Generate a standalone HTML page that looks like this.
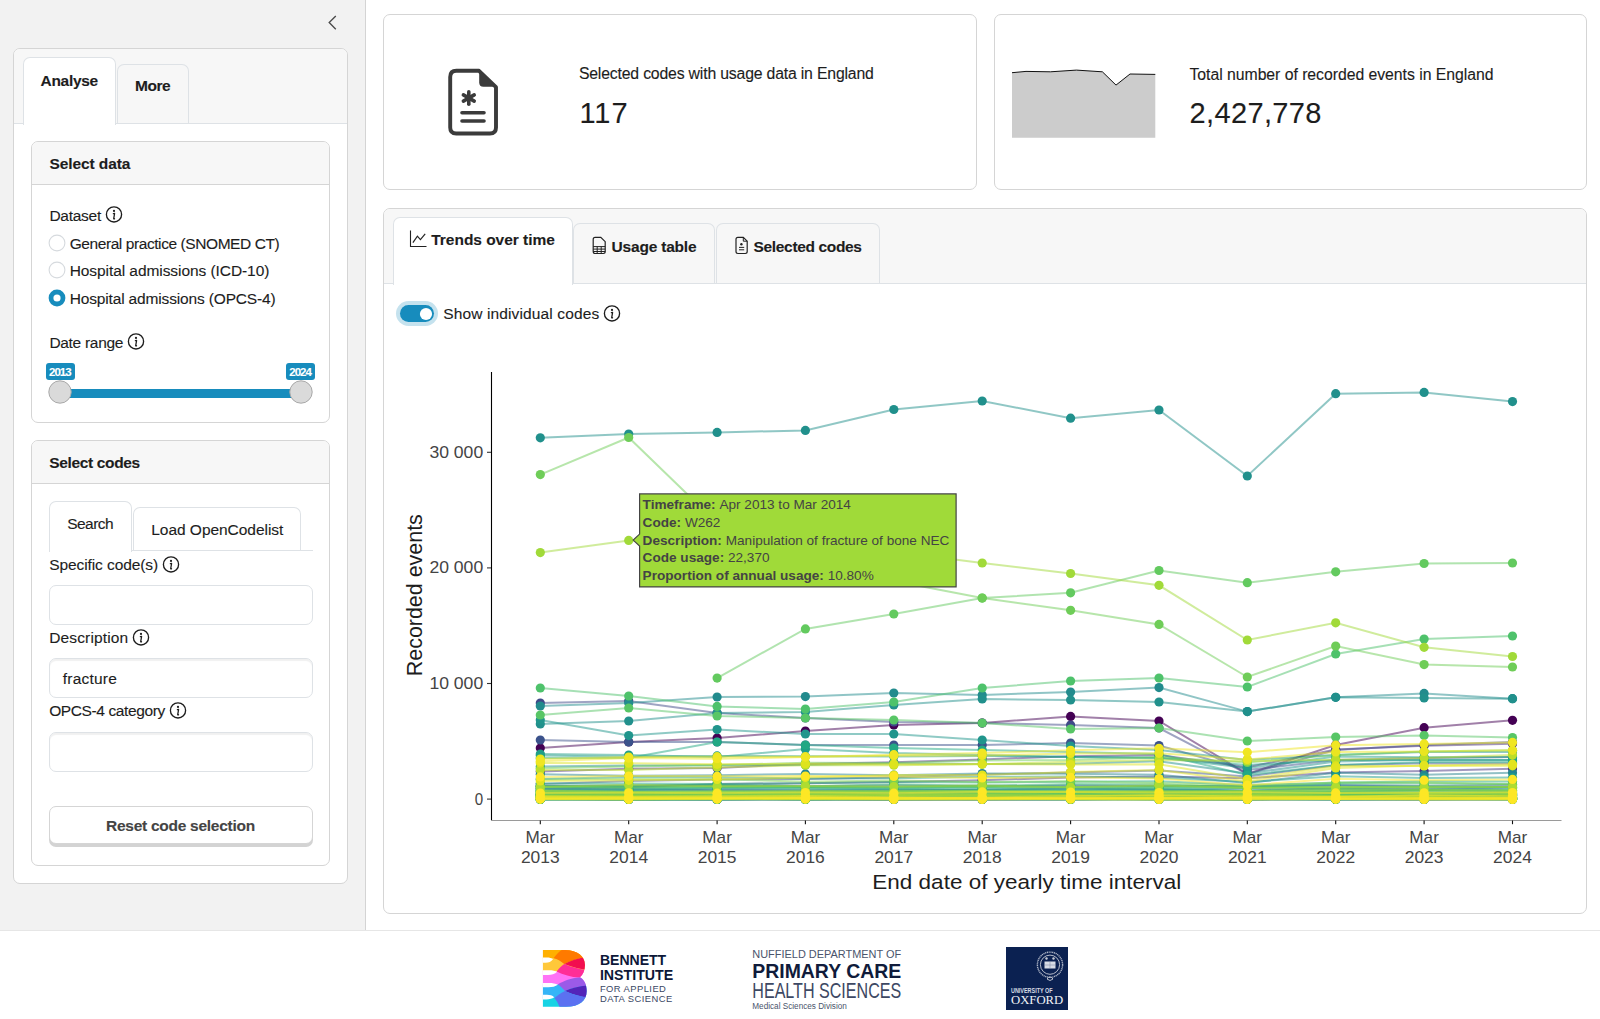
<!DOCTYPE html><html><head><meta charset="utf-8"><style>
html,body{margin:0;padding:0;}
body{width:1600px;height:1019px;position:relative;overflow:hidden;background:#fff;font-family:"Liberation Sans",sans-serif;}
.t{position:absolute;white-space:nowrap;line-height:normal;-webkit-text-stroke:0.12px currentColor;}
svg{overflow:visible;}
</style></head><body>
<div style="position:absolute;left:0.00px;top:0.00px;width:366.00px;height:931.00px;box-sizing:border-box;background:#f2f2f2;border-right:1px solid #d4d4d4;"></div>
<div style="position:absolute;left:0.00px;top:930.00px;width:1600.00px;height:1.00px;box-sizing:border-box;background:#e6e6e6;"></div>
<svg style="position:absolute;left:324.00px;top:12.00px;" width="16.00" height="22.00" viewBox="0 0 16.00 22.00"><path d="M11.8 4 L5.2 10.6 L11.8 17.2" fill="none" stroke="#4a4a4a" stroke-width="1.35"/></svg>
<div style="position:absolute;left:13.00px;top:48.00px;width:335.00px;height:836.00px;box-sizing:border-box;background:#fff;border:1px solid #d5d5d5;border-radius:7px;"></div>
<div style="position:absolute;left:14.00px;top:49.00px;width:333.00px;height:75.00px;box-sizing:border-box;background:#f7f7f7;border-bottom:1px solid #dee2e6;border-radius:6px 6px 0 0;"></div>
<div style="position:absolute;left:23.00px;top:57.00px;width:93.00px;height:67.50px;box-sizing:border-box;background:#fff;border:1px solid #dee2e6;border-bottom:none;border-radius:7px 7px 0 0;"></div>
<div style="position:absolute;left:117.00px;top:64.00px;width:72.00px;height:59.00px;box-sizing:border-box;background:#f7f7f7;border:1px solid #dee2e6;border-bottom:none;border-radius:7px 7px 0 0;"></div>
<div class="t" style="left:40.60px;top:71.56px;font-size:15.50px;font-weight:bold;letter-spacing:-0.324px;color:#1d1d1d;">Analyse</div>
<div class="t" style="left:135.00px;top:77.46px;font-size:15.50px;font-weight:bold;letter-spacing:-0.476px;color:#1d1d1d;">More</div>
<div style="position:absolute;left:31.00px;top:141.00px;width:299.00px;height:281.50px;box-sizing:border-box;background:#fff;border:1px solid #d5d5d5;border-radius:7px;"></div>
<div style="position:absolute;left:32.00px;top:142.00px;width:297.00px;height:43.00px;box-sizing:border-box;background:#f7f7f7;border-bottom:1px solid #d5d5d5;border-radius:6px 6px 0 0;"></div>
<div class="t" style="left:49.40px;top:155.36px;font-size:15.50px;font-weight:bold;letter-spacing:-0.075px;color:#1d1d1d;">Select data</div>
<div class="t" style="left:49.40px;top:206.96px;font-size:15.50px;letter-spacing:-0.252px;color:#1d1d1d;">Dataset</div>
<svg style="position:absolute;left:104.00px;top:204.40px;" width="20.00" height="20.00" viewBox="0 0 20.00 20.00"><circle cx="10" cy="10.4" r="7.60" fill="none" stroke="#1d1d1d" stroke-width="1.35"/><circle cx="10.0" cy="6.9" r="1.1" fill="#1d1d1d"/><path d="M9.4 9.7 L10.6 9.5 L9.7 14.7 Q9.9 15.1 10.5 14.8" fill="none" stroke="#1d1d1d" stroke-width="1.3" stroke-linecap="round" stroke-linejoin="round"/></svg>
<svg style="position:absolute;left:47.00px;top:233.20px;" width="20.00" height="20.00" viewBox="0 0 20.00 20.00"><circle cx="10" cy="10" r="7.9" fill="#fff" stroke="#d6dade" stroke-width="1.1"/></svg>
<div class="t" style="left:69.70px;top:235.16px;font-size:15.50px;letter-spacing:-0.421px;color:#1d1d1d;">General practice (SNOMED CT)</div>
<svg style="position:absolute;left:47.00px;top:260.40px;" width="20.00" height="20.00" viewBox="0 0 20.00 20.00"><circle cx="10" cy="10" r="7.9" fill="#fff" stroke="#d6dade" stroke-width="1.1"/></svg>
<div class="t" style="left:69.70px;top:262.36px;font-size:15.50px;letter-spacing:-0.069px;color:#1d1d1d;">Hospital admissions (ICD-10)</div>
<svg style="position:absolute;left:47.00px;top:287.60px;" width="20.00" height="20.00" viewBox="0 0 20.00 20.00"><circle cx="10" cy="10" r="8.4" fill="#178cbd"/><circle cx="10" cy="10" r="3.6" fill="#fff"/></svg>
<div class="t" style="left:69.70px;top:289.56px;font-size:15.50px;letter-spacing:-0.155px;color:#1d1d1d;">Hospital admissions (OPCS-4)</div>
<div class="t" style="left:49.40px;top:333.96px;font-size:15.50px;letter-spacing:-0.299px;color:#1d1d1d;">Date range</div>
<svg style="position:absolute;left:126.30px;top:331.30px;" width="20.00" height="20.00" viewBox="0 0 20.00 20.00"><circle cx="10" cy="10.4" r="7.60" fill="none" stroke="#1d1d1d" stroke-width="1.35"/><circle cx="10.0" cy="6.9" r="1.1" fill="#1d1d1d"/><path d="M9.4 9.7 L10.6 9.5 L9.7 14.7 Q9.9 15.1 10.5 14.8" fill="none" stroke="#1d1d1d" stroke-width="1.3" stroke-linecap="round" stroke-linejoin="round"/></svg>
<div style="position:absolute;left:60.00px;top:388.60px;width:241.00px;height:9.20px;box-sizing:border-box;background:#178cbd;"></div>
<div style="position:absolute;left:45.70px;top:363.00px;width:29.20px;height:17.00px;box-sizing:border-box;background:#178cbd;border-radius:3px;"></div>
<div class="t" style="left:49.00px;top:365.58px;font-size:11.50px;font-weight:bold;letter-spacing:-0.996px;color:#fff;">2013</div>
<svg style="position:absolute;left:48.30px;top:380.00px;" width="24.00" height="24.00" viewBox="0 0 24.00 24.00"><circle cx="12" cy="12" r="11.2" fill="#dadada" stroke="#a9a9a9" stroke-width="1"/></svg>
<div style="position:absolute;left:286.00px;top:363.00px;width:29.20px;height:17.00px;box-sizing:border-box;background:#178cbd;border-radius:3px;"></div>
<div class="t" style="left:289.30px;top:365.58px;font-size:11.50px;font-weight:bold;letter-spacing:-0.996px;color:#fff;">2024</div>
<svg style="position:absolute;left:288.60px;top:380.00px;" width="24.00" height="24.00" viewBox="0 0 24.00 24.00"><circle cx="12" cy="12" r="11.2" fill="#dadada" stroke="#a9a9a9" stroke-width="1"/></svg>
<div style="position:absolute;left:31.00px;top:440.00px;width:299.00px;height:426.00px;box-sizing:border-box;background:#fff;border:1px solid #d5d5d5;border-radius:7px;"></div>
<div style="position:absolute;left:32.00px;top:441.00px;width:297.00px;height:43.00px;box-sizing:border-box;background:#f7f7f7;border-bottom:1px solid #d5d5d5;border-radius:6px 6px 0 0;"></div>
<div class="t" style="left:49.20px;top:453.96px;font-size:15.50px;font-weight:bold;letter-spacing:-0.342px;color:#1d1d1d;">Select codes</div>
<div style="position:absolute;left:49.00px;top:550.00px;width:263.50px;height:1.00px;box-sizing:border-box;background:#dee2e6;"></div>
<div style="position:absolute;left:49.00px;top:501.00px;width:83.00px;height:50.50px;box-sizing:border-box;background:#fff;border:1px solid #dee2e6;border-bottom:none;border-radius:7px 7px 0 0;"></div>
<div style="position:absolute;left:133.00px;top:507.00px;width:168.00px;height:43.00px;box-sizing:border-box;background:#fff;border:1px solid #dee2e6;border-bottom:none;border-radius:7px 7px 0 0;"></div>
<div class="t" style="left:67.20px;top:514.96px;font-size:15.50px;letter-spacing:-0.521px;color:#1d1d1d;">Search</div>
<div class="t" style="left:151.30px;top:520.76px;font-size:15.50px;letter-spacing:-0.044px;color:#1d1d1d;">Load OpenCodelist</div>
<div class="t" style="left:49.20px;top:555.66px;font-size:15.50px;letter-spacing:-0.084px;color:#1d1d1d;">Specific code(s)</div>
<svg style="position:absolute;left:160.60px;top:553.50px;" width="20.00" height="20.00" viewBox="0 0 20.00 20.00"><circle cx="10" cy="10.4" r="7.60" fill="none" stroke="#1d1d1d" stroke-width="1.35"/><circle cx="10.0" cy="6.9" r="1.1" fill="#1d1d1d"/><path d="M9.4 9.7 L10.6 9.5 L9.7 14.7 Q9.9 15.1 10.5 14.8" fill="none" stroke="#1d1d1d" stroke-width="1.3" stroke-linecap="round" stroke-linejoin="round"/></svg>
<div style="position:absolute;left:49.00px;top:584.50px;width:263.50px;height:40.00px;box-sizing:border-box;background:#fff;border:1px solid #dee2e6;border-radius:7px;"></div>
<div class="t" style="left:49.20px;top:629.46px;font-size:15.50px;letter-spacing:0.147px;color:#1d1d1d;">Description</div>
<svg style="position:absolute;left:131.20px;top:627.00px;" width="20.00" height="20.00" viewBox="0 0 20.00 20.00"><circle cx="10" cy="10.4" r="7.60" fill="none" stroke="#1d1d1d" stroke-width="1.35"/><circle cx="10.0" cy="6.9" r="1.1" fill="#1d1d1d"/><path d="M9.4 9.7 L10.6 9.5 L9.7 14.7 Q9.9 15.1 10.5 14.8" fill="none" stroke="#1d1d1d" stroke-width="1.3" stroke-linecap="round" stroke-linejoin="round"/></svg>
<div style="position:absolute;left:49.00px;top:658.00px;width:263.50px;height:40.00px;box-sizing:border-box;background:#fff;border:1px solid #dee2e6;border-radius:7px;box-shadow:inset 0 2px 1px rgba(0,0,0,0.06);"></div>
<div class="t" style="left:62.80px;top:669.76px;font-size:15.50px;letter-spacing:0.208px;color:#1d1d1d;">fracture</div>
<div class="t" style="left:49.20px;top:702.46px;font-size:15.50px;letter-spacing:-0.390px;color:#1d1d1d;">OPCS-4 category</div>
<svg style="position:absolute;left:167.60px;top:700.00px;" width="20.00" height="20.00" viewBox="0 0 20.00 20.00"><circle cx="10" cy="10.4" r="7.60" fill="none" stroke="#1d1d1d" stroke-width="1.35"/><circle cx="10.0" cy="6.9" r="1.1" fill="#1d1d1d"/><path d="M9.4 9.7 L10.6 9.5 L9.7 14.7 Q9.9 15.1 10.5 14.8" fill="none" stroke="#1d1d1d" stroke-width="1.3" stroke-linecap="round" stroke-linejoin="round"/></svg>
<div style="position:absolute;left:49.00px;top:731.50px;width:263.50px;height:40.00px;box-sizing:border-box;background:#fff;border:1px solid #dee2e6;border-radius:7px;box-shadow:inset 0 2px 1px rgba(0,0,0,0.06);"></div>
<div style="position:absolute;left:49.00px;top:805.50px;width:263.50px;height:38.50px;box-sizing:border-box;background:#fff;border:1px solid #d5d5d5;border-radius:7px;box-shadow:0 3px 0 #d3d3d3;"></div>
<div class="t" style="left:106.10px;top:817.26px;font-size:15.50px;font-weight:bold;letter-spacing:-0.273px;color:#444;">Reset code selection</div>
<div style="position:absolute;left:383.00px;top:14.00px;width:594.00px;height:176.00px;box-sizing:border-box;background:#fff;border:1px solid #d5d5d5;border-radius:7px;"></div>
<div style="position:absolute;left:994.00px;top:14.00px;width:593.00px;height:176.00px;box-sizing:border-box;background:#fff;border:1px solid #d5d5d5;border-radius:7px;"></div>
<svg style="position:absolute;left:440.00px;top:60.00px;" width="70.00" height="85.00" viewBox="0 0 70.00 85.00">
<path d="M10.2 17 Q10.2 10.8 16.4 10.8 L39 10.8 L56 27.2 L56 67.5 Q56 73.5 50 73.5 L16.2 73.5 Q10.2 73.5 10.2 67.5 Z" fill="none" stroke="#3b3b3b" stroke-width="3.9" stroke-linejoin="round"/>
<path d="M39.2 10.8 L39.2 22.5 Q39.2 26.7 43.4 26.7 L56 26.7 Z" fill="#3b3b3b"/>
<g stroke="#3b3b3b" stroke-width="3.6" stroke-linecap="round">
<path d="M28.8 31.8 L28.8 44.2"/><path d="M23.4 34.9 L34.2 41.1"/><path d="M23.4 41.1 L34.2 34.9"/>
<path d="M22 52.7 L44 52.7"/><path d="M22 61 L44 61"/>
</g><circle cx="28.8" cy="38" r="3.3" fill="#3b3b3b"/></svg>
<div class="t" style="left:578.90px;top:65.29px;font-size:15.80px;letter-spacing:-0.179px;color:#1d1d1d;">Selected codes with usage data in England</div>
<div class="t" style="left:579.50px;top:97.03px;font-size:29.00px;letter-spacing:0.887px;color:#1d1d1d;">117</div>
<svg style="position:absolute;left:1000.00px;top:50.00px;" width="170.00" height="100.00" viewBox="0 0 170.00 100.00"><polygon points="12,87.7 12.0,22.7 26.0,21.4 50.4,21.8 76.4,20.1 102.4,21.8 116.0,35.1 130.0,24.0 155.3,24.4 155.3,87.7" fill="#cccccc"/><polyline points="12.0,22.7 26.0,21.4 50.4,21.8 76.4,20.1 102.4,21.8 116.0,35.1 130.0,24.0 155.3,24.4" fill="none" stroke="#111" stroke-width="1"/></svg>
<div class="t" style="left:1189.50px;top:65.59px;font-size:15.80px;letter-spacing:-0.040px;color:#1d1d1d;">Total number of recorded events in England</div>
<div class="t" style="left:1189.50px;top:96.83px;font-size:29.00px;letter-spacing:0.372px;color:#1d1d1d;">2,427,778</div>
<div style="position:absolute;left:383.00px;top:208.00px;width:1204.00px;height:705.50px;box-sizing:border-box;background:#fff;border:1px solid #d5d5d5;border-radius:7px;"></div>
<div style="position:absolute;left:384.00px;top:209.00px;width:1202.00px;height:75.00px;box-sizing:border-box;background:#f7f7f7;border-bottom:1px solid #dee2e6;border-radius:6px 6px 0 0;"></div>
<div style="position:absolute;left:392.50px;top:217.00px;width:180.00px;height:67.50px;box-sizing:border-box;background:#fff;border:1px solid #dee2e6;border-bottom:none;border-radius:7px 7px 0 0;"></div>
<div style="position:absolute;left:573.00px;top:223.00px;width:142.00px;height:60.00px;box-sizing:border-box;background:#f7f7f7;border:1px solid #dee2e6;border-bottom:none;border-radius:7px 7px 0 0;"></div>
<div style="position:absolute;left:715.50px;top:223.00px;width:164.50px;height:60.00px;box-sizing:border-box;background:#f7f7f7;border:1px solid #dee2e6;border-bottom:none;border-radius:7px 7px 0 0;"></div>
<svg style="position:absolute;left:409.00px;top:230.00px;" width="19.00" height="18.00" viewBox="0 0 19.00 18.00"><path d="M1.5 0.5 L1.5 16.5 L17.5 16.5" fill="none" stroke="#222" stroke-width="1.1"/><path d="M3.9 12.6 L8.4 6.2 L11.4 9.6 L16.2 3.8" fill="none" stroke="#222" stroke-width="1.2"/></svg>
<div class="t" style="left:431.30px;top:230.96px;font-size:15.50px;font-weight:bold;letter-spacing:-0.036px;color:#1d1d1d;">Trends over time</div>
<svg style="position:absolute;left:591.00px;top:236.00px;" width="16.00" height="19.00" viewBox="0 0 16.00 19.00"><path d="M2.2 3.2 Q2.2 1.3 4.1 1.3 L9.8 1.3 L14.2 5.7 L14.2 15.6 Q14.2 17.5 12.3 17.5 L4.1 17.5 Q2.2 17.5 2.2 15.6 Z" fill="none" stroke="#222" stroke-width="1.2"/><path d="M2.2 10.6 L14.2 10.6 M2.2 13.1 L14.2 13.1 M2.2 15.5 L14.2 15.5 M6.2 10.6 L6.2 17.5 M10.2 10.6 L10.2 17.5" stroke="#222" stroke-width="1"/></svg>
<div class="t" style="left:611.60px;top:237.56px;font-size:15.50px;font-weight:bold;letter-spacing:-0.200px;color:#1d1d1d;">Usage table</div>
<svg style="position:absolute;left:734.00px;top:236.00px;" width="15.00" height="19.00" viewBox="0 0 15.00 19.00"><path d="M2 3.2 Q2 1.3 3.9 1.3 L9.3 1.3 L13.2 5.2 L13.2 15.6 Q13.2 17.5 11.3 17.5 L3.9 17.5 Q2 17.5 2 15.6 Z" fill="none" stroke="#222" stroke-width="1.2"/><path d="M9.3 1.3 L9.3 5.2 L13.2 5.2" fill="none" stroke="#222" stroke-width="1"/><circle cx="7.4" cy="8.3" r="1.2" fill="#222"/><path d="M5 11.4 L10.2 11.4 M5 13.8 L10.2 13.8" stroke="#222" stroke-width="1"/></svg>
<div class="t" style="left:753.60px;top:237.56px;font-size:15.50px;font-weight:bold;letter-spacing:-0.343px;color:#1d1d1d;">Selected codes</div>
<div style="position:absolute;left:396.00px;top:301.00px;width:42.00px;height:25.00px;box-sizing:border-box;background:rgba(23,140,189,0.25);border-radius:13px;"></div>
<div style="position:absolute;left:400.40px;top:305.00px;width:33.60px;height:17.20px;box-sizing:border-box;background:#178cbd;border-radius:9px;"></div>
<svg style="position:absolute;left:418.60px;top:306.60px;" width="14.00" height="14.00" viewBox="0 0 14.00 14.00"><circle cx="7" cy="7" r="6.1" fill="#fff"/></svg>
<div class="t" style="left:443.20px;top:305.16px;font-size:15.50px;letter-spacing:0.131px;color:#1d1d1d;">Show individual codes</div>
<svg style="position:absolute;left:601.50px;top:303.40px;" width="20.00" height="20.00" viewBox="0 0 20.00 20.00"><circle cx="10" cy="10.4" r="7.60" fill="none" stroke="#1d1d1d" stroke-width="1.35"/><circle cx="10.0" cy="6.9" r="1.1" fill="#1d1d1d"/><path d="M9.4 9.7 L10.6 9.5 L9.7 14.7 Q9.9 15.1 10.5 14.8" fill="none" stroke="#1d1d1d" stroke-width="1.3" stroke-linecap="round" stroke-linejoin="round"/></svg>
<svg style="position:absolute;left:0;top:0;font-family:'Liberation Sans',sans-serif" width="1600" height="1019" viewBox="0 0 1600 1019"><path d="M540.3 748.0 L628.7 742.0 L717.1 738.0 L805.4 731.0 L893.8 725.0 L982.2 723.0 L1070.6 716.4 L1159.0 721.0 L1247.3 774.0 L1335.7 745.0 L1424.1 727.7 L1512.5 720.3" fill="none" stroke="#440154" stroke-opacity="0.5" stroke-width="2"/><circle cx="540.3" cy="748.0" r="4.6" fill="#440154"/><circle cx="628.7" cy="742.0" r="4.6" fill="#440154"/><circle cx="717.1" cy="738.0" r="4.6" fill="#440154"/><circle cx="805.4" cy="731.0" r="4.6" fill="#440154"/><circle cx="893.8" cy="725.0" r="4.6" fill="#440154"/><circle cx="982.2" cy="723.0" r="4.6" fill="#440154"/><circle cx="1070.6" cy="716.4" r="4.6" fill="#440154"/><circle cx="1159.0" cy="721.0" r="4.6" fill="#440154"/><circle cx="1247.3" cy="774.0" r="4.6" fill="#440154"/><circle cx="1335.7" cy="745.0" r="4.6" fill="#440154"/><circle cx="1424.1" cy="727.7" r="4.6" fill="#440154"/><circle cx="1512.5" cy="720.3" r="4.6" fill="#440154"/><path d="M540.3 771.4 L628.7 768.8 L717.1 767.9 L805.4 763.9 L893.8 762.2 L982.2 759.4 L1070.6 756.2 L1159.0 754.9 L1247.3 767.2 L1335.7 749.5 L1424.1 745.7 L1512.5 743.8" fill="none" stroke="#472b7a" stroke-opacity="0.5" stroke-width="2"/><circle cx="540.3" cy="771.4" r="4.6" fill="#472b7a"/><circle cx="628.7" cy="768.8" r="4.6" fill="#472b7a"/><circle cx="717.1" cy="767.9" r="4.6" fill="#472b7a"/><circle cx="805.4" cy="763.9" r="4.6" fill="#472b7a"/><circle cx="893.8" cy="762.2" r="4.6" fill="#472b7a"/><circle cx="982.2" cy="759.4" r="4.6" fill="#472b7a"/><circle cx="1070.6" cy="756.2" r="4.6" fill="#472b7a"/><circle cx="1159.0" cy="754.9" r="4.6" fill="#472b7a"/><circle cx="1247.3" cy="767.2" r="4.6" fill="#472b7a"/><circle cx="1335.7" cy="749.5" r="4.6" fill="#472b7a"/><circle cx="1424.1" cy="745.7" r="4.6" fill="#472b7a"/><circle cx="1512.5" cy="743.8" r="4.6" fill="#472b7a"/><path d="M540.3 788.6 L628.7 787.2 L717.1 784.1 L805.4 783.2 L893.8 782.0 L982.2 780.2 L1070.6 777.4 L1159.0 776.6 L1247.3 778.2 L1335.7 772.6 L1424.1 771.0 L1512.5 768.7" fill="none" stroke="#463480" stroke-opacity="0.5" stroke-width="2"/><circle cx="540.3" cy="788.6" r="4.6" fill="#463480"/><circle cx="628.7" cy="787.2" r="4.6" fill="#463480"/><circle cx="717.1" cy="784.1" r="4.6" fill="#463480"/><circle cx="805.4" cy="783.2" r="4.6" fill="#463480"/><circle cx="893.8" cy="782.0" r="4.6" fill="#463480"/><circle cx="982.2" cy="780.2" r="4.6" fill="#463480"/><circle cx="1070.6" cy="777.4" r="4.6" fill="#463480"/><circle cx="1159.0" cy="776.6" r="4.6" fill="#463480"/><circle cx="1247.3" cy="778.2" r="4.6" fill="#463480"/><circle cx="1335.7" cy="772.6" r="4.6" fill="#463480"/><circle cx="1424.1" cy="771.0" r="4.6" fill="#463480"/><circle cx="1512.5" cy="768.7" r="4.6" fill="#463480"/><path d="M540.3 703.0 L628.7 701.0 L717.1 713.0 L805.4 718.0 L893.8 722.0 L982.2 723.0 L1070.6 725.0 L1159.0 728.0 L1247.3 774.0 L1335.7 750.0 L1424.1 745.0 L1512.5 742.0" fill="none" stroke="#3f4988" stroke-opacity="0.5" stroke-width="2"/><circle cx="540.3" cy="703.0" r="4.6" fill="#3f4988"/><circle cx="628.7" cy="701.0" r="4.6" fill="#3f4988"/><circle cx="717.1" cy="713.0" r="4.6" fill="#3f4988"/><circle cx="805.4" cy="718.0" r="4.6" fill="#3f4988"/><circle cx="893.8" cy="722.0" r="4.6" fill="#3f4988"/><circle cx="982.2" cy="723.0" r="4.6" fill="#3f4988"/><circle cx="1070.6" cy="725.0" r="4.6" fill="#3f4988"/><circle cx="1159.0" cy="728.0" r="4.6" fill="#3f4988"/><circle cx="1247.3" cy="774.0" r="4.6" fill="#3f4988"/><circle cx="1335.7" cy="750.0" r="4.6" fill="#3f4988"/><circle cx="1424.1" cy="745.0" r="4.6" fill="#3f4988"/><circle cx="1512.5" cy="742.0" r="4.6" fill="#3f4988"/><path d="M540.3 740.0 L628.7 742.0 L717.1 742.0 L805.4 745.0 L893.8 745.0 L982.2 745.0 L1070.6 743.0 L1159.0 745.6 L1247.3 770.0 L1335.7 760.0 L1424.1 758.0 L1512.5 757.0" fill="none" stroke="#3b528b" stroke-opacity="0.5" stroke-width="2"/><circle cx="540.3" cy="740.0" r="4.6" fill="#3b528b"/><circle cx="628.7" cy="742.0" r="4.6" fill="#3b528b"/><circle cx="717.1" cy="742.0" r="4.6" fill="#3b528b"/><circle cx="805.4" cy="745.0" r="4.6" fill="#3b528b"/><circle cx="893.8" cy="745.0" r="4.6" fill="#3b528b"/><circle cx="982.2" cy="745.0" r="4.6" fill="#3b528b"/><circle cx="1070.6" cy="743.0" r="4.6" fill="#3b528b"/><circle cx="1159.0" cy="745.6" r="4.6" fill="#3b528b"/><circle cx="1247.3" cy="770.0" r="4.6" fill="#3b528b"/><circle cx="1335.7" cy="760.0" r="4.6" fill="#3b528b"/><circle cx="1424.1" cy="758.0" r="4.6" fill="#3b528b"/><circle cx="1512.5" cy="757.0" r="4.6" fill="#3b528b"/><path d="M540.3 784.0 L628.7 781.0 L717.1 779.6 L805.4 778.9 L893.8 777.2 L982.2 774.4 L1070.6 772.6 L1159.0 770.4 L1247.3 776.4 L1335.7 765.2 L1424.1 763.2 L1512.5 763.4" fill="none" stroke="#3b528b" stroke-opacity="0.5" stroke-width="2"/><circle cx="540.3" cy="784.0" r="4.6" fill="#3b528b"/><circle cx="628.7" cy="781.0" r="4.6" fill="#3b528b"/><circle cx="717.1" cy="779.6" r="4.6" fill="#3b528b"/><circle cx="805.4" cy="778.9" r="4.6" fill="#3b528b"/><circle cx="893.8" cy="777.2" r="4.6" fill="#3b528b"/><circle cx="982.2" cy="774.4" r="4.6" fill="#3b528b"/><circle cx="1070.6" cy="772.6" r="4.6" fill="#3b528b"/><circle cx="1159.0" cy="770.4" r="4.6" fill="#3b528b"/><circle cx="1247.3" cy="776.4" r="4.6" fill="#3b528b"/><circle cx="1335.7" cy="765.2" r="4.6" fill="#3b528b"/><circle cx="1424.1" cy="763.2" r="4.6" fill="#3b528b"/><circle cx="1512.5" cy="763.4" r="4.6" fill="#3b528b"/><path d="M540.3 790.6 L628.7 789.1 L717.1 790.2 L805.4 790.9 L893.8 790.4 L982.2 789.8 L1070.6 788.8 L1159.0 789.4 L1247.3 790.8 L1335.7 788.3 L1424.1 789.0 L1512.5 787.0" fill="none" stroke="#355f8d" stroke-opacity="0.5" stroke-width="2"/><circle cx="540.3" cy="790.6" r="4.6" fill="#355f8d"/><circle cx="628.7" cy="789.1" r="4.6" fill="#355f8d"/><circle cx="717.1" cy="790.2" r="4.6" fill="#355f8d"/><circle cx="805.4" cy="790.9" r="4.6" fill="#355f8d"/><circle cx="893.8" cy="790.4" r="4.6" fill="#355f8d"/><circle cx="982.2" cy="789.8" r="4.6" fill="#355f8d"/><circle cx="1070.6" cy="788.8" r="4.6" fill="#355f8d"/><circle cx="1159.0" cy="789.4" r="4.6" fill="#355f8d"/><circle cx="1247.3" cy="790.8" r="4.6" fill="#355f8d"/><circle cx="1335.7" cy="788.3" r="4.6" fill="#355f8d"/><circle cx="1424.1" cy="789.0" r="4.6" fill="#355f8d"/><circle cx="1512.5" cy="787.0" r="4.6" fill="#355f8d"/><path d="M540.3 794.5 L628.7 794.5 L717.1 793.8 L805.4 793.8 L893.8 793.9 L982.2 793.2 L1070.6 793.9 L1159.0 794.3 L1247.3 794.8 L1335.7 794.5 L1424.1 794.3 L1512.5 794.2" fill="none" stroke="#34628d" stroke-opacity="0.5" stroke-width="2"/><circle cx="540.3" cy="794.5" r="4.6" fill="#34628d"/><circle cx="628.7" cy="794.5" r="4.6" fill="#34628d"/><circle cx="717.1" cy="793.8" r="4.6" fill="#34628d"/><circle cx="805.4" cy="793.8" r="4.6" fill="#34628d"/><circle cx="893.8" cy="793.9" r="4.6" fill="#34628d"/><circle cx="982.2" cy="793.2" r="4.6" fill="#34628d"/><circle cx="1070.6" cy="793.9" r="4.6" fill="#34628d"/><circle cx="1159.0" cy="794.3" r="4.6" fill="#34628d"/><circle cx="1247.3" cy="794.8" r="4.6" fill="#34628d"/><circle cx="1335.7" cy="794.5" r="4.6" fill="#34628d"/><circle cx="1424.1" cy="794.3" r="4.6" fill="#34628d"/><circle cx="1512.5" cy="794.2" r="4.6" fill="#34628d"/><path d="M540.3 786.1 L628.7 785.8 L717.1 785.0 L805.4 786.2 L893.8 785.3 L982.2 786.3 L1070.6 785.2 L1159.0 785.8 L1247.3 786.2 L1335.7 785.1 L1424.1 785.7 L1512.5 785.0" fill="none" stroke="#33648e" stroke-opacity="0.5" stroke-width="2"/><circle cx="540.3" cy="786.1" r="4.6" fill="#33648e"/><circle cx="628.7" cy="785.8" r="4.6" fill="#33648e"/><circle cx="717.1" cy="785.0" r="4.6" fill="#33648e"/><circle cx="805.4" cy="786.2" r="4.6" fill="#33648e"/><circle cx="893.8" cy="785.3" r="4.6" fill="#33648e"/><circle cx="982.2" cy="786.3" r="4.6" fill="#33648e"/><circle cx="1070.6" cy="785.2" r="4.6" fill="#33648e"/><circle cx="1159.0" cy="785.8" r="4.6" fill="#33648e"/><circle cx="1247.3" cy="786.2" r="4.6" fill="#33648e"/><circle cx="1335.7" cy="785.1" r="4.6" fill="#33648e"/><circle cx="1424.1" cy="785.7" r="4.6" fill="#33648e"/><circle cx="1512.5" cy="785.0" r="4.6" fill="#33648e"/><path d="M540.3 798.9 L628.7 799.4 L717.1 799.4 L805.4 799.3 L893.8 799.4 L982.2 799.4 L1070.6 799.4 L1159.0 799.4 L1247.3 799.4 L1335.7 798.6 L1424.1 799.4 L1512.5 799.4" fill="none" stroke="#32668e" stroke-opacity="0.5" stroke-width="2"/><circle cx="540.3" cy="798.9" r="4.6" fill="#32668e"/><circle cx="628.7" cy="799.4" r="4.6" fill="#32668e"/><circle cx="717.1" cy="799.4" r="4.6" fill="#32668e"/><circle cx="805.4" cy="799.3" r="4.6" fill="#32668e"/><circle cx="893.8" cy="799.4" r="4.6" fill="#32668e"/><circle cx="982.2" cy="799.4" r="4.6" fill="#32668e"/><circle cx="1070.6" cy="799.4" r="4.6" fill="#32668e"/><circle cx="1159.0" cy="799.4" r="4.6" fill="#32668e"/><circle cx="1247.3" cy="799.4" r="4.6" fill="#32668e"/><circle cx="1335.7" cy="798.6" r="4.6" fill="#32668e"/><circle cx="1424.1" cy="799.4" r="4.6" fill="#32668e"/><circle cx="1512.5" cy="799.4" r="4.6" fill="#32668e"/><path d="M540.3 798.7 L628.7 798.6 L717.1 799.4 L805.4 799.4 L893.8 799.4 L982.2 798.8 L1070.6 798.9 L1159.0 798.9 L1247.3 799.4 L1335.7 799.4 L1424.1 799.4 L1512.5 798.7" fill="none" stroke="#31698e" stroke-opacity="0.5" stroke-width="2"/><circle cx="540.3" cy="798.7" r="4.6" fill="#31698e"/><circle cx="628.7" cy="798.6" r="4.6" fill="#31698e"/><circle cx="717.1" cy="799.4" r="4.6" fill="#31698e"/><circle cx="805.4" cy="799.4" r="4.6" fill="#31698e"/><circle cx="893.8" cy="799.4" r="4.6" fill="#31698e"/><circle cx="982.2" cy="798.8" r="4.6" fill="#31698e"/><circle cx="1070.6" cy="798.9" r="4.6" fill="#31698e"/><circle cx="1159.0" cy="798.9" r="4.6" fill="#31698e"/><circle cx="1247.3" cy="799.4" r="4.6" fill="#31698e"/><circle cx="1335.7" cy="799.4" r="4.6" fill="#31698e"/><circle cx="1424.1" cy="799.4" r="4.6" fill="#31698e"/><circle cx="1512.5" cy="798.7" r="4.6" fill="#31698e"/><path d="M540.3 797.2 L628.7 798.4 L717.1 797.2 L805.4 797.2 L893.8 797.9 L982.2 797.8 L1070.6 798.1 L1159.0 797.5 L1247.3 798.3 L1335.7 797.2 L1424.1 797.4 L1512.5 798.1" fill="none" stroke="#2f6c8e" stroke-opacity="0.5" stroke-width="2"/><circle cx="540.3" cy="797.2" r="4.6" fill="#2f6c8e"/><circle cx="628.7" cy="798.4" r="4.6" fill="#2f6c8e"/><circle cx="717.1" cy="797.2" r="4.6" fill="#2f6c8e"/><circle cx="805.4" cy="797.2" r="4.6" fill="#2f6c8e"/><circle cx="893.8" cy="797.9" r="4.6" fill="#2f6c8e"/><circle cx="982.2" cy="797.8" r="4.6" fill="#2f6c8e"/><circle cx="1070.6" cy="798.1" r="4.6" fill="#2f6c8e"/><circle cx="1159.0" cy="797.5" r="4.6" fill="#2f6c8e"/><circle cx="1247.3" cy="798.3" r="4.6" fill="#2f6c8e"/><circle cx="1335.7" cy="797.2" r="4.6" fill="#2f6c8e"/><circle cx="1424.1" cy="797.4" r="4.6" fill="#2f6c8e"/><circle cx="1512.5" cy="798.1" r="4.6" fill="#2f6c8e"/><path d="M540.3 795.9 L628.7 796.7 L717.1 795.7 L805.4 795.3 L893.8 796.4 L982.2 796.6 L1070.6 796.4 L1159.0 796.2 L1247.3 796.4 L1335.7 795.7 L1424.1 796.2 L1512.5 795.3" fill="none" stroke="#2d728e" stroke-opacity="0.5" stroke-width="2"/><circle cx="540.3" cy="795.9" r="4.6" fill="#2d728e"/><circle cx="628.7" cy="796.7" r="4.6" fill="#2d728e"/><circle cx="717.1" cy="795.7" r="4.6" fill="#2d728e"/><circle cx="805.4" cy="795.3" r="4.6" fill="#2d728e"/><circle cx="893.8" cy="796.4" r="4.6" fill="#2d728e"/><circle cx="982.2" cy="796.6" r="4.6" fill="#2d728e"/><circle cx="1070.6" cy="796.4" r="4.6" fill="#2d728e"/><circle cx="1159.0" cy="796.2" r="4.6" fill="#2d728e"/><circle cx="1247.3" cy="796.4" r="4.6" fill="#2d728e"/><circle cx="1335.7" cy="795.7" r="4.6" fill="#2d728e"/><circle cx="1424.1" cy="796.2" r="4.6" fill="#2d728e"/><circle cx="1512.5" cy="795.3" r="4.6" fill="#2d728e"/><path d="M540.3 799.4 L628.7 799.4 L717.1 799.3 L805.4 798.8 L893.8 799.4 L982.2 799.4 L1070.6 798.9 L1159.0 799.2 L1247.3 799.4 L1335.7 798.3 L1424.1 798.6 L1512.5 799.0" fill="none" stroke="#2b758e" stroke-opacity="0.5" stroke-width="2"/><circle cx="540.3" cy="799.4" r="4.6" fill="#2b758e"/><circle cx="628.7" cy="799.4" r="4.6" fill="#2b758e"/><circle cx="717.1" cy="799.3" r="4.6" fill="#2b758e"/><circle cx="805.4" cy="798.8" r="4.6" fill="#2b758e"/><circle cx="893.8" cy="799.4" r="4.6" fill="#2b758e"/><circle cx="982.2" cy="799.4" r="4.6" fill="#2b758e"/><circle cx="1070.6" cy="798.9" r="4.6" fill="#2b758e"/><circle cx="1159.0" cy="799.2" r="4.6" fill="#2b758e"/><circle cx="1247.3" cy="799.4" r="4.6" fill="#2b758e"/><circle cx="1335.7" cy="798.3" r="4.6" fill="#2b758e"/><circle cx="1424.1" cy="798.6" r="4.6" fill="#2b758e"/><circle cx="1512.5" cy="799.0" r="4.6" fill="#2b758e"/><path d="M540.3 791.2 L628.7 791.1 L717.1 790.4 L805.4 790.4 L893.8 790.6 L982.2 790.5 L1070.6 791.5 L1159.0 790.9 L1247.3 791.1 L1335.7 791.7 L1424.1 790.5 L1512.5 791.0" fill="none" stroke="#2b768e" stroke-opacity="0.5" stroke-width="2"/><circle cx="540.3" cy="791.2" r="4.6" fill="#2b768e"/><circle cx="628.7" cy="791.1" r="4.6" fill="#2b768e"/><circle cx="717.1" cy="790.4" r="4.6" fill="#2b768e"/><circle cx="805.4" cy="790.4" r="4.6" fill="#2b768e"/><circle cx="893.8" cy="790.6" r="4.6" fill="#2b768e"/><circle cx="982.2" cy="790.5" r="4.6" fill="#2b768e"/><circle cx="1070.6" cy="791.5" r="4.6" fill="#2b768e"/><circle cx="1159.0" cy="790.9" r="4.6" fill="#2b768e"/><circle cx="1247.3" cy="791.1" r="4.6" fill="#2b768e"/><circle cx="1335.7" cy="791.7" r="4.6" fill="#2b768e"/><circle cx="1424.1" cy="790.5" r="4.6" fill="#2b768e"/><circle cx="1512.5" cy="791.0" r="4.6" fill="#2b768e"/><path d="M540.3 798.4 L628.7 799.0 L717.1 799.2 L805.4 799.4 L893.8 798.3 L982.2 798.5 L1070.6 798.6 L1159.0 798.6 L1247.3 798.7 L1335.7 799.4 L1424.1 799.2 L1512.5 798.6" fill="none" stroke="#297b8e" stroke-opacity="0.5" stroke-width="2"/><circle cx="540.3" cy="798.4" r="4.6" fill="#297b8e"/><circle cx="628.7" cy="799.0" r="4.6" fill="#297b8e"/><circle cx="717.1" cy="799.2" r="4.6" fill="#297b8e"/><circle cx="805.4" cy="799.4" r="4.6" fill="#297b8e"/><circle cx="893.8" cy="798.3" r="4.6" fill="#297b8e"/><circle cx="982.2" cy="798.5" r="4.6" fill="#297b8e"/><circle cx="1070.6" cy="798.6" r="4.6" fill="#297b8e"/><circle cx="1159.0" cy="798.6" r="4.6" fill="#297b8e"/><circle cx="1247.3" cy="798.7" r="4.6" fill="#297b8e"/><circle cx="1335.7" cy="799.4" r="4.6" fill="#297b8e"/><circle cx="1424.1" cy="799.2" r="4.6" fill="#297b8e"/><circle cx="1512.5" cy="798.6" r="4.6" fill="#297b8e"/><path d="M540.3 799.1 L628.7 799.4 L717.1 798.5 L805.4 798.8 L893.8 799.4 L982.2 799.4 L1070.6 799.4 L1159.0 798.6 L1247.3 799.3 L1335.7 799.4 L1424.1 799.3 L1512.5 799.4" fill="none" stroke="#297b8e" stroke-opacity="0.5" stroke-width="2"/><circle cx="540.3" cy="799.1" r="4.6" fill="#297b8e"/><circle cx="628.7" cy="799.4" r="4.6" fill="#297b8e"/><circle cx="717.1" cy="798.5" r="4.6" fill="#297b8e"/><circle cx="805.4" cy="798.8" r="4.6" fill="#297b8e"/><circle cx="893.8" cy="799.4" r="4.6" fill="#297b8e"/><circle cx="982.2" cy="799.4" r="4.6" fill="#297b8e"/><circle cx="1070.6" cy="799.4" r="4.6" fill="#297b8e"/><circle cx="1159.0" cy="798.6" r="4.6" fill="#297b8e"/><circle cx="1247.3" cy="799.3" r="4.6" fill="#297b8e"/><circle cx="1335.7" cy="799.4" r="4.6" fill="#297b8e"/><circle cx="1424.1" cy="799.3" r="4.6" fill="#297b8e"/><circle cx="1512.5" cy="799.4" r="4.6" fill="#297b8e"/><path d="M540.3 796.1 L628.7 796.6 L717.1 797.2 L805.4 797.3 L893.8 796.7 L982.2 796.4 L1070.6 796.2 L1159.0 796.9 L1247.3 797.4 L1335.7 796.1 L1424.1 797.1 L1512.5 795.9" fill="none" stroke="#287c8e" stroke-opacity="0.5" stroke-width="2"/><circle cx="540.3" cy="796.1" r="4.6" fill="#287c8e"/><circle cx="628.7" cy="796.6" r="4.6" fill="#287c8e"/><circle cx="717.1" cy="797.2" r="4.6" fill="#287c8e"/><circle cx="805.4" cy="797.3" r="4.6" fill="#287c8e"/><circle cx="893.8" cy="796.7" r="4.6" fill="#287c8e"/><circle cx="982.2" cy="796.4" r="4.6" fill="#287c8e"/><circle cx="1070.6" cy="796.2" r="4.6" fill="#287c8e"/><circle cx="1159.0" cy="796.9" r="4.6" fill="#287c8e"/><circle cx="1247.3" cy="797.4" r="4.6" fill="#287c8e"/><circle cx="1335.7" cy="796.1" r="4.6" fill="#287c8e"/><circle cx="1424.1" cy="797.1" r="4.6" fill="#287c8e"/><circle cx="1512.5" cy="795.9" r="4.6" fill="#287c8e"/><path d="M540.3 797.6 L628.7 796.8 L717.1 796.8 L805.4 797.0 L893.8 797.8 L982.2 797.8 L1070.6 796.7 L1159.0 796.9 L1247.3 796.9 L1335.7 796.9 L1424.1 797.0 L1512.5 796.9" fill="none" stroke="#287c8e" stroke-opacity="0.5" stroke-width="2"/><circle cx="540.3" cy="797.6" r="4.6" fill="#287c8e"/><circle cx="628.7" cy="796.8" r="4.6" fill="#287c8e"/><circle cx="717.1" cy="796.8" r="4.6" fill="#287c8e"/><circle cx="805.4" cy="797.0" r="4.6" fill="#287c8e"/><circle cx="893.8" cy="797.8" r="4.6" fill="#287c8e"/><circle cx="982.2" cy="797.8" r="4.6" fill="#287c8e"/><circle cx="1070.6" cy="796.7" r="4.6" fill="#287c8e"/><circle cx="1159.0" cy="796.9" r="4.6" fill="#287c8e"/><circle cx="1247.3" cy="796.9" r="4.6" fill="#287c8e"/><circle cx="1335.7" cy="796.9" r="4.6" fill="#287c8e"/><circle cx="1424.1" cy="797.0" r="4.6" fill="#287c8e"/><circle cx="1512.5" cy="796.9" r="4.6" fill="#287c8e"/><path d="M540.3 786.0 L628.7 785.6 L717.1 785.8 L805.4 786.8 L893.8 786.7 L982.2 785.6 L1070.6 786.6 L1159.0 785.9 L1247.3 786.0 L1335.7 785.6 L1424.1 786.7 L1512.5 786.9" fill="none" stroke="#287d8e" stroke-opacity="0.5" stroke-width="2"/><circle cx="540.3" cy="786.0" r="4.6" fill="#287d8e"/><circle cx="628.7" cy="785.6" r="4.6" fill="#287d8e"/><circle cx="717.1" cy="785.8" r="4.6" fill="#287d8e"/><circle cx="805.4" cy="786.8" r="4.6" fill="#287d8e"/><circle cx="893.8" cy="786.7" r="4.6" fill="#287d8e"/><circle cx="982.2" cy="785.6" r="4.6" fill="#287d8e"/><circle cx="1070.6" cy="786.6" r="4.6" fill="#287d8e"/><circle cx="1159.0" cy="785.9" r="4.6" fill="#287d8e"/><circle cx="1247.3" cy="786.0" r="4.6" fill="#287d8e"/><circle cx="1335.7" cy="785.6" r="4.6" fill="#287d8e"/><circle cx="1424.1" cy="786.7" r="4.6" fill="#287d8e"/><circle cx="1512.5" cy="786.9" r="4.6" fill="#287d8e"/><path d="M540.3 789.1 L628.7 789.7 L717.1 788.7 L805.4 789.6 L893.8 789.3 L982.2 789.8 L1070.6 788.5 L1159.0 789.7 L1247.3 788.6 L1335.7 789.2 L1424.1 789.9 L1512.5 788.4" fill="none" stroke="#25838e" stroke-opacity="0.5" stroke-width="2"/><circle cx="540.3" cy="789.1" r="4.6" fill="#25838e"/><circle cx="628.7" cy="789.7" r="4.6" fill="#25838e"/><circle cx="717.1" cy="788.7" r="4.6" fill="#25838e"/><circle cx="805.4" cy="789.6" r="4.6" fill="#25838e"/><circle cx="893.8" cy="789.3" r="4.6" fill="#25838e"/><circle cx="982.2" cy="789.8" r="4.6" fill="#25838e"/><circle cx="1070.6" cy="788.5" r="4.6" fill="#25838e"/><circle cx="1159.0" cy="789.7" r="4.6" fill="#25838e"/><circle cx="1247.3" cy="788.6" r="4.6" fill="#25838e"/><circle cx="1335.7" cy="789.2" r="4.6" fill="#25838e"/><circle cx="1424.1" cy="789.9" r="4.6" fill="#25838e"/><circle cx="1512.5" cy="788.4" r="4.6" fill="#25838e"/><path d="M540.3 774.2 L628.7 775.8 L717.1 775.3 L805.4 773.9 L893.8 775.2 L982.2 773.5 L1070.6 773.8 L1159.0 774.8 L1247.3 783.0 L1335.7 772.7 L1424.1 774.7 L1512.5 772.7" fill="none" stroke="#25848e" stroke-opacity="0.5" stroke-width="2"/><circle cx="540.3" cy="774.2" r="4.6" fill="#25848e"/><circle cx="628.7" cy="775.8" r="4.6" fill="#25848e"/><circle cx="717.1" cy="775.3" r="4.6" fill="#25848e"/><circle cx="805.4" cy="773.9" r="4.6" fill="#25848e"/><circle cx="893.8" cy="775.2" r="4.6" fill="#25848e"/><circle cx="982.2" cy="773.5" r="4.6" fill="#25848e"/><circle cx="1070.6" cy="773.8" r="4.6" fill="#25848e"/><circle cx="1159.0" cy="774.8" r="4.6" fill="#25848e"/><circle cx="1247.3" cy="783.0" r="4.6" fill="#25848e"/><circle cx="1335.7" cy="772.7" r="4.6" fill="#25848e"/><circle cx="1424.1" cy="774.7" r="4.6" fill="#25848e"/><circle cx="1512.5" cy="772.7" r="4.6" fill="#25848e"/><path d="M540.3 799.4 L628.7 799.4 L717.1 799.2 L805.4 799.4 L893.8 799.4 L982.2 799.4 L1070.6 799.4 L1159.0 798.7 L1247.3 799.4 L1335.7 799.3 L1424.1 799.4 L1512.5 799.4" fill="none" stroke="#24878e" stroke-opacity="0.5" stroke-width="2"/><circle cx="540.3" cy="799.4" r="4.6" fill="#24878e"/><circle cx="628.7" cy="799.4" r="4.6" fill="#24878e"/><circle cx="717.1" cy="799.2" r="4.6" fill="#24878e"/><circle cx="805.4" cy="799.4" r="4.6" fill="#24878e"/><circle cx="893.8" cy="799.4" r="4.6" fill="#24878e"/><circle cx="982.2" cy="799.4" r="4.6" fill="#24878e"/><circle cx="1070.6" cy="799.4" r="4.6" fill="#24878e"/><circle cx="1159.0" cy="798.7" r="4.6" fill="#24878e"/><circle cx="1247.3" cy="799.4" r="4.6" fill="#24878e"/><circle cx="1335.7" cy="799.3" r="4.6" fill="#24878e"/><circle cx="1424.1" cy="799.4" r="4.6" fill="#24878e"/><circle cx="1512.5" cy="799.4" r="4.6" fill="#24878e"/><path d="M540.3 706.0 L628.7 703.0 L717.1 697.0 L805.4 696.6 L893.8 693.0 L982.2 695.0 L1070.6 692.0 L1159.0 687.6 L1247.3 711.6 L1335.7 697.3 L1424.1 693.4 L1512.5 698.7" fill="none" stroke="#228b8d" stroke-opacity="0.5" stroke-width="2"/><circle cx="540.3" cy="706.0" r="4.6" fill="#228b8d"/><circle cx="628.7" cy="703.0" r="4.6" fill="#228b8d"/><circle cx="717.1" cy="697.0" r="4.6" fill="#228b8d"/><circle cx="805.4" cy="696.6" r="4.6" fill="#228b8d"/><circle cx="893.8" cy="693.0" r="4.6" fill="#228b8d"/><circle cx="982.2" cy="695.0" r="4.6" fill="#228b8d"/><circle cx="1070.6" cy="692.0" r="4.6" fill="#228b8d"/><circle cx="1159.0" cy="687.6" r="4.6" fill="#228b8d"/><circle cx="1247.3" cy="711.6" r="4.6" fill="#228b8d"/><circle cx="1335.7" cy="697.3" r="4.6" fill="#228b8d"/><circle cx="1424.1" cy="693.4" r="4.6" fill="#228b8d"/><circle cx="1512.5" cy="698.7" r="4.6" fill="#228b8d"/><path d="M540.3 437.8 L628.7 434.1 L717.1 432.4 L805.4 430.4 L893.8 409.5 L982.2 401.0 L1070.6 418.2 L1159.0 410.0 L1247.3 476.0 L1335.7 393.7 L1424.1 392.4 L1512.5 401.6" fill="none" stroke="#21908c" stroke-opacity="0.5" stroke-width="2"/><circle cx="540.3" cy="437.8" r="4.6" fill="#21908c"/><circle cx="628.7" cy="434.1" r="4.6" fill="#21908c"/><circle cx="717.1" cy="432.4" r="4.6" fill="#21908c"/><circle cx="805.4" cy="430.4" r="4.6" fill="#21908c"/><circle cx="893.8" cy="409.5" r="4.6" fill="#21908c"/><circle cx="982.2" cy="401.0" r="4.6" fill="#21908c"/><circle cx="1070.6" cy="418.2" r="4.6" fill="#21908c"/><circle cx="1159.0" cy="410.0" r="4.6" fill="#21908c"/><circle cx="1247.3" cy="476.0" r="4.6" fill="#21908c"/><circle cx="1335.7" cy="393.7" r="4.6" fill="#21908c"/><circle cx="1424.1" cy="392.4" r="4.6" fill="#21908c"/><circle cx="1512.5" cy="401.6" r="4.6" fill="#21908c"/><path d="M540.3 724.0 L628.7 721.0 L717.1 713.0 L805.4 712.0 L893.8 705.0 L982.2 699.0 L1070.6 700.0 L1159.0 702.0 L1247.3 711.6 L1335.7 697.3 L1424.1 698.0 L1512.5 698.7" fill="none" stroke="#21908c" stroke-opacity="0.5" stroke-width="2"/><circle cx="540.3" cy="724.0" r="4.6" fill="#21908c"/><circle cx="628.7" cy="721.0" r="4.6" fill="#21908c"/><circle cx="717.1" cy="713.0" r="4.6" fill="#21908c"/><circle cx="805.4" cy="712.0" r="4.6" fill="#21908c"/><circle cx="893.8" cy="705.0" r="4.6" fill="#21908c"/><circle cx="982.2" cy="699.0" r="4.6" fill="#21908c"/><circle cx="1070.6" cy="700.0" r="4.6" fill="#21908c"/><circle cx="1159.0" cy="702.0" r="4.6" fill="#21908c"/><circle cx="1247.3" cy="711.6" r="4.6" fill="#21908c"/><circle cx="1335.7" cy="697.3" r="4.6" fill="#21908c"/><circle cx="1424.1" cy="698.0" r="4.6" fill="#21908c"/><circle cx="1512.5" cy="698.7" r="4.6" fill="#21908c"/><path d="M540.3 766.5 L628.7 765.5 L717.1 765.2 L805.4 765.0 L893.8 763.6 L982.2 764.0 L1070.6 763.7 L1159.0 761.2 L1247.3 773.4 L1335.7 761.6 L1424.1 759.7 L1512.5 759.9" fill="none" stroke="#21908c" stroke-opacity="0.5" stroke-width="2"/><circle cx="540.3" cy="766.5" r="4.6" fill="#21908c"/><circle cx="628.7" cy="765.5" r="4.6" fill="#21908c"/><circle cx="717.1" cy="765.2" r="4.6" fill="#21908c"/><circle cx="805.4" cy="765.0" r="4.6" fill="#21908c"/><circle cx="893.8" cy="763.6" r="4.6" fill="#21908c"/><circle cx="982.2" cy="764.0" r="4.6" fill="#21908c"/><circle cx="1070.6" cy="763.7" r="4.6" fill="#21908c"/><circle cx="1159.0" cy="761.2" r="4.6" fill="#21908c"/><circle cx="1247.3" cy="773.4" r="4.6" fill="#21908c"/><circle cx="1335.7" cy="761.6" r="4.6" fill="#21908c"/><circle cx="1424.1" cy="759.7" r="4.6" fill="#21908c"/><circle cx="1512.5" cy="759.9" r="4.6" fill="#21908c"/><path d="M540.3 797.9 L628.7 798.4 L717.1 797.5 L805.4 798.0 L893.8 798.2 L982.2 798.6 L1070.6 798.7 L1159.0 798.3 L1247.3 797.6 L1335.7 798.6 L1424.1 798.8 L1512.5 798.2" fill="none" stroke="#20938c" stroke-opacity="0.5" stroke-width="2"/><circle cx="540.3" cy="797.9" r="4.6" fill="#20938c"/><circle cx="628.7" cy="798.4" r="4.6" fill="#20938c"/><circle cx="717.1" cy="797.5" r="4.6" fill="#20938c"/><circle cx="805.4" cy="798.0" r="4.6" fill="#20938c"/><circle cx="893.8" cy="798.2" r="4.6" fill="#20938c"/><circle cx="982.2" cy="798.6" r="4.6" fill="#20938c"/><circle cx="1070.6" cy="798.7" r="4.6" fill="#20938c"/><circle cx="1159.0" cy="798.3" r="4.6" fill="#20938c"/><circle cx="1247.3" cy="797.6" r="4.6" fill="#20938c"/><circle cx="1335.7" cy="798.6" r="4.6" fill="#20938c"/><circle cx="1424.1" cy="798.8" r="4.6" fill="#20938c"/><circle cx="1512.5" cy="798.2" r="4.6" fill="#20938c"/><path d="M540.3 720.0 L628.7 735.6 L717.1 729.6 L805.4 734.0 L893.8 734.0 L982.2 740.0 L1070.6 746.0 L1159.0 750.0 L1247.3 760.0 L1335.7 755.0 L1424.1 752.0 L1512.5 752.0" fill="none" stroke="#20958c" stroke-opacity="0.5" stroke-width="2"/><circle cx="540.3" cy="720.0" r="4.6" fill="#20958c"/><circle cx="628.7" cy="735.6" r="4.6" fill="#20958c"/><circle cx="717.1" cy="729.6" r="4.6" fill="#20958c"/><circle cx="805.4" cy="734.0" r="4.6" fill="#20958c"/><circle cx="893.8" cy="734.0" r="4.6" fill="#20958c"/><circle cx="982.2" cy="740.0" r="4.6" fill="#20958c"/><circle cx="1070.6" cy="746.0" r="4.6" fill="#20958c"/><circle cx="1159.0" cy="750.0" r="4.6" fill="#20958c"/><circle cx="1247.3" cy="760.0" r="4.6" fill="#20958c"/><circle cx="1335.7" cy="755.0" r="4.6" fill="#20958c"/><circle cx="1424.1" cy="752.0" r="4.6" fill="#20958c"/><circle cx="1512.5" cy="752.0" r="4.6" fill="#20958c"/><path d="M540.3 798.2 L628.7 799.4 L717.1 799.4 L805.4 798.7 L893.8 798.9 L982.2 798.9 L1070.6 798.5 L1159.0 799.4 L1247.3 799.1 L1335.7 798.5 L1424.1 798.1 L1512.5 798.9" fill="none" stroke="#20968b" stroke-opacity="0.5" stroke-width="2"/><circle cx="540.3" cy="798.2" r="4.6" fill="#20968b"/><circle cx="628.7" cy="799.4" r="4.6" fill="#20968b"/><circle cx="717.1" cy="799.4" r="4.6" fill="#20968b"/><circle cx="805.4" cy="798.7" r="4.6" fill="#20968b"/><circle cx="893.8" cy="798.9" r="4.6" fill="#20968b"/><circle cx="982.2" cy="798.9" r="4.6" fill="#20968b"/><circle cx="1070.6" cy="798.5" r="4.6" fill="#20968b"/><circle cx="1159.0" cy="799.4" r="4.6" fill="#20968b"/><circle cx="1247.3" cy="799.1" r="4.6" fill="#20968b"/><circle cx="1335.7" cy="798.5" r="4.6" fill="#20968b"/><circle cx="1424.1" cy="798.1" r="4.6" fill="#20968b"/><circle cx="1512.5" cy="798.9" r="4.6" fill="#20968b"/><path d="M540.3 798.4 L628.7 797.9 L717.1 798.0 L805.4 798.1 L893.8 798.4 L982.2 796.9 L1070.6 797.8 L1159.0 798.0 L1247.3 797.3 L1335.7 797.5 L1424.1 796.9 L1512.5 797.2" fill="none" stroke="#1f968b" stroke-opacity="0.5" stroke-width="2"/><circle cx="540.3" cy="798.4" r="4.6" fill="#1f968b"/><circle cx="628.7" cy="797.9" r="4.6" fill="#1f968b"/><circle cx="717.1" cy="798.0" r="4.6" fill="#1f968b"/><circle cx="805.4" cy="798.1" r="4.6" fill="#1f968b"/><circle cx="893.8" cy="798.4" r="4.6" fill="#1f968b"/><circle cx="982.2" cy="796.9" r="4.6" fill="#1f968b"/><circle cx="1070.6" cy="797.8" r="4.6" fill="#1f968b"/><circle cx="1159.0" cy="798.0" r="4.6" fill="#1f968b"/><circle cx="1247.3" cy="797.3" r="4.6" fill="#1f968b"/><circle cx="1335.7" cy="797.5" r="4.6" fill="#1f968b"/><circle cx="1424.1" cy="796.9" r="4.6" fill="#1f968b"/><circle cx="1512.5" cy="797.2" r="4.6" fill="#1f968b"/><path d="M540.3 799.2 L628.7 798.6 L717.1 798.6 L805.4 799.1 L893.8 798.2 L982.2 799.2 L1070.6 798.3 L1159.0 798.9 L1247.3 798.5 L1335.7 798.4 L1424.1 798.9 L1512.5 798.8" fill="none" stroke="#1f968b" stroke-opacity="0.5" stroke-width="2"/><circle cx="540.3" cy="799.2" r="4.6" fill="#1f968b"/><circle cx="628.7" cy="798.6" r="4.6" fill="#1f968b"/><circle cx="717.1" cy="798.6" r="4.6" fill="#1f968b"/><circle cx="805.4" cy="799.1" r="4.6" fill="#1f968b"/><circle cx="893.8" cy="798.2" r="4.6" fill="#1f968b"/><circle cx="982.2" cy="799.2" r="4.6" fill="#1f968b"/><circle cx="1070.6" cy="798.3" r="4.6" fill="#1f968b"/><circle cx="1159.0" cy="798.9" r="4.6" fill="#1f968b"/><circle cx="1247.3" cy="798.5" r="4.6" fill="#1f968b"/><circle cx="1335.7" cy="798.4" r="4.6" fill="#1f968b"/><circle cx="1424.1" cy="798.9" r="4.6" fill="#1f968b"/><circle cx="1512.5" cy="798.8" r="4.6" fill="#1f968b"/><path d="M540.3 798.9 L628.7 798.7 L717.1 798.0 L805.4 799.4 L893.8 799.3 L982.2 798.3 L1070.6 799.0 L1159.0 798.5 L1247.3 798.6 L1335.7 798.9 L1424.1 798.5 L1512.5 798.5" fill="none" stroke="#1f988b" stroke-opacity="0.5" stroke-width="2"/><circle cx="540.3" cy="798.9" r="4.6" fill="#1f988b"/><circle cx="628.7" cy="798.7" r="4.6" fill="#1f988b"/><circle cx="717.1" cy="798.0" r="4.6" fill="#1f988b"/><circle cx="805.4" cy="799.4" r="4.6" fill="#1f988b"/><circle cx="893.8" cy="799.3" r="4.6" fill="#1f988b"/><circle cx="982.2" cy="798.3" r="4.6" fill="#1f988b"/><circle cx="1070.6" cy="799.0" r="4.6" fill="#1f988b"/><circle cx="1159.0" cy="798.5" r="4.6" fill="#1f988b"/><circle cx="1247.3" cy="798.6" r="4.6" fill="#1f988b"/><circle cx="1335.7" cy="798.9" r="4.6" fill="#1f988b"/><circle cx="1424.1" cy="798.5" r="4.6" fill="#1f988b"/><circle cx="1512.5" cy="798.5" r="4.6" fill="#1f988b"/><path d="M540.3 755.6 L628.7 756.7 L717.1 755.9 L805.4 756.2 L893.8 756.6 L982.2 755.9 L1070.6 756.9 L1159.0 757.4 L1247.3 768.1 L1335.7 756.6 L1424.1 757.3 L1512.5 757.0" fill="none" stroke="#209c89" stroke-opacity="0.5" stroke-width="2"/><circle cx="540.3" cy="755.6" r="4.6" fill="#209c89"/><circle cx="628.7" cy="756.7" r="4.6" fill="#209c89"/><circle cx="717.1" cy="755.9" r="4.6" fill="#209c89"/><circle cx="805.4" cy="756.2" r="4.6" fill="#209c89"/><circle cx="893.8" cy="756.6" r="4.6" fill="#209c89"/><circle cx="982.2" cy="755.9" r="4.6" fill="#209c89"/><circle cx="1070.6" cy="756.9" r="4.6" fill="#209c89"/><circle cx="1159.0" cy="757.4" r="4.6" fill="#209c89"/><circle cx="1247.3" cy="768.1" r="4.6" fill="#209c89"/><circle cx="1335.7" cy="756.6" r="4.6" fill="#209c89"/><circle cx="1424.1" cy="757.3" r="4.6" fill="#209c89"/><circle cx="1512.5" cy="757.0" r="4.6" fill="#209c89"/><path d="M540.3 778.9 L628.7 777.1 L717.1 776.9 L805.4 778.6 L893.8 778.3 L982.2 776.8 L1070.6 776.5 L1159.0 777.7 L1247.3 782.1 L1335.7 776.2 L1424.1 777.9 L1512.5 777.6" fill="none" stroke="#209c89" stroke-opacity="0.5" stroke-width="2"/><circle cx="540.3" cy="778.9" r="4.6" fill="#209c89"/><circle cx="628.7" cy="777.1" r="4.6" fill="#209c89"/><circle cx="717.1" cy="776.9" r="4.6" fill="#209c89"/><circle cx="805.4" cy="778.6" r="4.6" fill="#209c89"/><circle cx="893.8" cy="778.3" r="4.6" fill="#209c89"/><circle cx="982.2" cy="776.8" r="4.6" fill="#209c89"/><circle cx="1070.6" cy="776.5" r="4.6" fill="#209c89"/><circle cx="1159.0" cy="777.7" r="4.6" fill="#209c89"/><circle cx="1247.3" cy="782.1" r="4.6" fill="#209c89"/><circle cx="1335.7" cy="776.2" r="4.6" fill="#209c89"/><circle cx="1424.1" cy="777.9" r="4.6" fill="#209c89"/><circle cx="1512.5" cy="777.6" r="4.6" fill="#209c89"/><path d="M540.3 797.9 L628.7 797.7 L717.1 798.0 L805.4 797.9 L893.8 798.0 L982.2 798.0 L1070.6 798.2 L1159.0 797.6 L1247.3 797.5 L1335.7 797.8 L1424.1 797.9 L1512.5 797.3" fill="none" stroke="#209d89" stroke-opacity="0.5" stroke-width="2"/><circle cx="540.3" cy="797.9" r="4.6" fill="#209d89"/><circle cx="628.7" cy="797.7" r="4.6" fill="#209d89"/><circle cx="717.1" cy="798.0" r="4.6" fill="#209d89"/><circle cx="805.4" cy="797.9" r="4.6" fill="#209d89"/><circle cx="893.8" cy="798.0" r="4.6" fill="#209d89"/><circle cx="982.2" cy="798.0" r="4.6" fill="#209d89"/><circle cx="1070.6" cy="798.2" r="4.6" fill="#209d89"/><circle cx="1159.0" cy="797.6" r="4.6" fill="#209d89"/><circle cx="1247.3" cy="797.5" r="4.6" fill="#209d89"/><circle cx="1335.7" cy="797.8" r="4.6" fill="#209d89"/><circle cx="1424.1" cy="797.9" r="4.6" fill="#209d89"/><circle cx="1512.5" cy="797.3" r="4.6" fill="#209d89"/><path d="M540.3 794.9 L628.7 794.0 L717.1 794.3 L805.4 794.1 L893.8 794.9 L982.2 794.2 L1070.6 794.7 L1159.0 795.2 L1247.3 794.2 L1335.7 794.5 L1424.1 794.8 L1512.5 795.1" fill="none" stroke="#209e89" stroke-opacity="0.5" stroke-width="2"/><circle cx="540.3" cy="794.9" r="4.6" fill="#209e89"/><circle cx="628.7" cy="794.0" r="4.6" fill="#209e89"/><circle cx="717.1" cy="794.3" r="4.6" fill="#209e89"/><circle cx="805.4" cy="794.1" r="4.6" fill="#209e89"/><circle cx="893.8" cy="794.9" r="4.6" fill="#209e89"/><circle cx="982.2" cy="794.2" r="4.6" fill="#209e89"/><circle cx="1070.6" cy="794.7" r="4.6" fill="#209e89"/><circle cx="1159.0" cy="795.2" r="4.6" fill="#209e89"/><circle cx="1247.3" cy="794.2" r="4.6" fill="#209e89"/><circle cx="1335.7" cy="794.5" r="4.6" fill="#209e89"/><circle cx="1424.1" cy="794.8" r="4.6" fill="#209e89"/><circle cx="1512.5" cy="795.1" r="4.6" fill="#209e89"/><path d="M540.3 754.0 L628.7 755.0 L717.1 757.0 L805.4 749.0 L893.8 753.0 L982.2 755.0 L1070.6 757.0 L1159.0 758.0 L1247.3 765.0 L1335.7 760.0 L1424.1 760.0 L1512.5 760.0" fill="none" stroke="#209e88" stroke-opacity="0.5" stroke-width="2"/><circle cx="540.3" cy="754.0" r="4.6" fill="#209e88"/><circle cx="628.7" cy="755.0" r="4.6" fill="#209e88"/><circle cx="717.1" cy="757.0" r="4.6" fill="#209e88"/><circle cx="805.4" cy="749.0" r="4.6" fill="#209e88"/><circle cx="893.8" cy="753.0" r="4.6" fill="#209e88"/><circle cx="982.2" cy="755.0" r="4.6" fill="#209e88"/><circle cx="1070.6" cy="757.0" r="4.6" fill="#209e88"/><circle cx="1159.0" cy="758.0" r="4.6" fill="#209e88"/><circle cx="1247.3" cy="765.0" r="4.6" fill="#209e88"/><circle cx="1335.7" cy="760.0" r="4.6" fill="#209e88"/><circle cx="1424.1" cy="760.0" r="4.6" fill="#209e88"/><circle cx="1512.5" cy="760.0" r="4.6" fill="#209e88"/><path d="M540.3 793.8 L628.7 794.9 L717.1 793.6 L805.4 793.7 L893.8 794.7 L982.2 794.0 L1070.6 794.9 L1159.0 794.9 L1247.3 794.6 L1335.7 793.7 L1424.1 794.6 L1512.5 795.0" fill="none" stroke="#21a087" stroke-opacity="0.5" stroke-width="2"/><circle cx="540.3" cy="793.8" r="4.6" fill="#21a087"/><circle cx="628.7" cy="794.9" r="4.6" fill="#21a087"/><circle cx="717.1" cy="793.6" r="4.6" fill="#21a087"/><circle cx="805.4" cy="793.7" r="4.6" fill="#21a087"/><circle cx="893.8" cy="794.7" r="4.6" fill="#21a087"/><circle cx="982.2" cy="794.0" r="4.6" fill="#21a087"/><circle cx="1070.6" cy="794.9" r="4.6" fill="#21a087"/><circle cx="1159.0" cy="794.9" r="4.6" fill="#21a087"/><circle cx="1247.3" cy="794.6" r="4.6" fill="#21a087"/><circle cx="1335.7" cy="793.7" r="4.6" fill="#21a087"/><circle cx="1424.1" cy="794.6" r="4.6" fill="#21a087"/><circle cx="1512.5" cy="795.0" r="4.6" fill="#21a087"/><path d="M540.3 797.8 L628.7 797.1 L717.1 797.7 L805.4 797.3 L893.8 797.8 L982.2 797.4 L1070.6 797.9 L1159.0 796.9 L1247.3 797.9 L1335.7 797.1 L1424.1 798.4 L1512.5 797.8" fill="none" stroke="#21a486" stroke-opacity="0.5" stroke-width="2"/><circle cx="540.3" cy="797.8" r="4.6" fill="#21a486"/><circle cx="628.7" cy="797.1" r="4.6" fill="#21a486"/><circle cx="717.1" cy="797.7" r="4.6" fill="#21a486"/><circle cx="805.4" cy="797.3" r="4.6" fill="#21a486"/><circle cx="893.8" cy="797.8" r="4.6" fill="#21a486"/><circle cx="982.2" cy="797.4" r="4.6" fill="#21a486"/><circle cx="1070.6" cy="797.9" r="4.6" fill="#21a486"/><circle cx="1159.0" cy="796.9" r="4.6" fill="#21a486"/><circle cx="1247.3" cy="797.9" r="4.6" fill="#21a486"/><circle cx="1335.7" cy="797.1" r="4.6" fill="#21a486"/><circle cx="1424.1" cy="798.4" r="4.6" fill="#21a486"/><circle cx="1512.5" cy="797.8" r="4.6" fill="#21a486"/><path d="M540.3 798.0 L628.7 799.0 L717.1 798.2 L805.4 798.6 L893.8 799.0 L982.2 798.5 L1070.6 798.2 L1159.0 799.2 L1247.3 799.2 L1335.7 798.3 L1424.1 798.6 L1512.5 799.3" fill="none" stroke="#22a585" stroke-opacity="0.5" stroke-width="2"/><circle cx="540.3" cy="798.0" r="4.6" fill="#22a585"/><circle cx="628.7" cy="799.0" r="4.6" fill="#22a585"/><circle cx="717.1" cy="798.2" r="4.6" fill="#22a585"/><circle cx="805.4" cy="798.6" r="4.6" fill="#22a585"/><circle cx="893.8" cy="799.0" r="4.6" fill="#22a585"/><circle cx="982.2" cy="798.5" r="4.6" fill="#22a585"/><circle cx="1070.6" cy="798.2" r="4.6" fill="#22a585"/><circle cx="1159.0" cy="799.2" r="4.6" fill="#22a585"/><circle cx="1247.3" cy="799.2" r="4.6" fill="#22a585"/><circle cx="1335.7" cy="798.3" r="4.6" fill="#22a585"/><circle cx="1424.1" cy="798.6" r="4.6" fill="#22a585"/><circle cx="1512.5" cy="799.3" r="4.6" fill="#22a585"/><path d="M540.3 758.0 L628.7 758.0 L717.1 742.0 L805.4 745.0 L893.8 748.0 L982.2 750.0 L1070.6 752.0 L1159.0 754.0 L1247.3 775.0 L1335.7 765.0 L1424.1 762.0 L1512.5 762.0" fill="none" stroke="#22a884" stroke-opacity="0.5" stroke-width="2"/><circle cx="540.3" cy="758.0" r="4.6" fill="#22a884"/><circle cx="628.7" cy="758.0" r="4.6" fill="#22a884"/><circle cx="717.1" cy="742.0" r="4.6" fill="#22a884"/><circle cx="805.4" cy="745.0" r="4.6" fill="#22a884"/><circle cx="893.8" cy="748.0" r="4.6" fill="#22a884"/><circle cx="982.2" cy="750.0" r="4.6" fill="#22a884"/><circle cx="1070.6" cy="752.0" r="4.6" fill="#22a884"/><circle cx="1159.0" cy="754.0" r="4.6" fill="#22a884"/><circle cx="1247.3" cy="775.0" r="4.6" fill="#22a884"/><circle cx="1335.7" cy="765.0" r="4.6" fill="#22a884"/><circle cx="1424.1" cy="762.0" r="4.6" fill="#22a884"/><circle cx="1512.5" cy="762.0" r="4.6" fill="#22a884"/><path d="M540.3 783.4 L628.7 783.6 L717.1 783.9 L805.4 783.2 L893.8 781.9 L982.2 782.5 L1070.6 781.7 L1159.0 781.2 L1247.3 785.0 L1335.7 782.7 L1424.1 781.3 L1512.5 781.5" fill="none" stroke="#22a884" stroke-opacity="0.5" stroke-width="2"/><circle cx="540.3" cy="783.4" r="4.6" fill="#22a884"/><circle cx="628.7" cy="783.6" r="4.6" fill="#22a884"/><circle cx="717.1" cy="783.9" r="4.6" fill="#22a884"/><circle cx="805.4" cy="783.2" r="4.6" fill="#22a884"/><circle cx="893.8" cy="781.9" r="4.6" fill="#22a884"/><circle cx="982.2" cy="782.5" r="4.6" fill="#22a884"/><circle cx="1070.6" cy="781.7" r="4.6" fill="#22a884"/><circle cx="1159.0" cy="781.2" r="4.6" fill="#22a884"/><circle cx="1247.3" cy="785.0" r="4.6" fill="#22a884"/><circle cx="1335.7" cy="782.7" r="4.6" fill="#22a884"/><circle cx="1424.1" cy="781.3" r="4.6" fill="#22a884"/><circle cx="1512.5" cy="781.5" r="4.6" fill="#22a884"/><path d="M540.3 792.3 L628.7 792.7 L717.1 793.4 L805.4 793.0 L893.8 792.2 L982.2 792.4 L1070.6 792.3 L1159.0 792.2 L1247.3 792.7 L1335.7 792.2 L1424.1 793.5 L1512.5 792.7" fill="none" stroke="#24aa83" stroke-opacity="0.5" stroke-width="2"/><circle cx="540.3" cy="792.3" r="4.6" fill="#24aa83"/><circle cx="628.7" cy="792.7" r="4.6" fill="#24aa83"/><circle cx="717.1" cy="793.4" r="4.6" fill="#24aa83"/><circle cx="805.4" cy="793.0" r="4.6" fill="#24aa83"/><circle cx="893.8" cy="792.2" r="4.6" fill="#24aa83"/><circle cx="982.2" cy="792.4" r="4.6" fill="#24aa83"/><circle cx="1070.6" cy="792.3" r="4.6" fill="#24aa83"/><circle cx="1159.0" cy="792.2" r="4.6" fill="#24aa83"/><circle cx="1247.3" cy="792.7" r="4.6" fill="#24aa83"/><circle cx="1335.7" cy="792.2" r="4.6" fill="#24aa83"/><circle cx="1424.1" cy="793.5" r="4.6" fill="#24aa83"/><circle cx="1512.5" cy="792.7" r="4.6" fill="#24aa83"/><path d="M540.3 788.5 L628.7 789.8 L717.1 788.0 L805.4 788.4 L893.8 789.3 L982.2 788.3 L1070.6 790.3 L1159.0 789.0 L1247.3 790.8 L1335.7 788.7 L1424.1 790.2 L1512.5 789.9" fill="none" stroke="#28ac81" stroke-opacity="0.5" stroke-width="2"/><circle cx="540.3" cy="788.5" r="4.6" fill="#28ac81"/><circle cx="628.7" cy="789.8" r="4.6" fill="#28ac81"/><circle cx="717.1" cy="788.0" r="4.6" fill="#28ac81"/><circle cx="805.4" cy="788.4" r="4.6" fill="#28ac81"/><circle cx="893.8" cy="789.3" r="4.6" fill="#28ac81"/><circle cx="982.2" cy="788.3" r="4.6" fill="#28ac81"/><circle cx="1070.6" cy="790.3" r="4.6" fill="#28ac81"/><circle cx="1159.0" cy="789.0" r="4.6" fill="#28ac81"/><circle cx="1247.3" cy="790.8" r="4.6" fill="#28ac81"/><circle cx="1335.7" cy="788.7" r="4.6" fill="#28ac81"/><circle cx="1424.1" cy="790.2" r="4.6" fill="#28ac81"/><circle cx="1512.5" cy="789.9" r="4.6" fill="#28ac81"/><path d="M540.3 794.7 L628.7 793.8 L717.1 793.9 L805.4 795.0 L893.8 794.9 L982.2 794.9 L1070.6 793.5 L1159.0 793.6 L1247.3 793.9 L1335.7 794.2 L1424.1 794.5 L1512.5 793.6" fill="none" stroke="#29ae80" stroke-opacity="0.5" stroke-width="2"/><circle cx="540.3" cy="794.7" r="4.6" fill="#29ae80"/><circle cx="628.7" cy="793.8" r="4.6" fill="#29ae80"/><circle cx="717.1" cy="793.9" r="4.6" fill="#29ae80"/><circle cx="805.4" cy="795.0" r="4.6" fill="#29ae80"/><circle cx="893.8" cy="794.9" r="4.6" fill="#29ae80"/><circle cx="982.2" cy="794.9" r="4.6" fill="#29ae80"/><circle cx="1070.6" cy="793.5" r="4.6" fill="#29ae80"/><circle cx="1159.0" cy="793.6" r="4.6" fill="#29ae80"/><circle cx="1247.3" cy="793.9" r="4.6" fill="#29ae80"/><circle cx="1335.7" cy="794.2" r="4.6" fill="#29ae80"/><circle cx="1424.1" cy="794.5" r="4.6" fill="#29ae80"/><circle cx="1512.5" cy="793.6" r="4.6" fill="#29ae80"/><path d="M540.3 795.8 L628.7 796.7 L717.1 797.1 L805.4 796.4 L893.8 796.7 L982.2 796.9 L1070.6 795.9 L1159.0 797.1 L1247.3 796.6 L1335.7 795.9 L1424.1 795.7 L1512.5 795.9" fill="none" stroke="#2fb27c" stroke-opacity="0.5" stroke-width="2"/><circle cx="540.3" cy="795.8" r="4.6" fill="#2fb27c"/><circle cx="628.7" cy="796.7" r="4.6" fill="#2fb27c"/><circle cx="717.1" cy="797.1" r="4.6" fill="#2fb27c"/><circle cx="805.4" cy="796.4" r="4.6" fill="#2fb27c"/><circle cx="893.8" cy="796.7" r="4.6" fill="#2fb27c"/><circle cx="982.2" cy="796.9" r="4.6" fill="#2fb27c"/><circle cx="1070.6" cy="795.9" r="4.6" fill="#2fb27c"/><circle cx="1159.0" cy="797.1" r="4.6" fill="#2fb27c"/><circle cx="1247.3" cy="796.6" r="4.6" fill="#2fb27c"/><circle cx="1335.7" cy="795.9" r="4.6" fill="#2fb27c"/><circle cx="1424.1" cy="795.7" r="4.6" fill="#2fb27c"/><circle cx="1512.5" cy="795.9" r="4.6" fill="#2fb27c"/><path d="M540.3 796.7 L628.7 796.6 L717.1 796.3 L805.4 795.5 L893.8 795.3 L982.2 796.6 L1070.6 796.4 L1159.0 796.1 L1247.3 795.7 L1335.7 795.6 L1424.1 796.2 L1512.5 796.0" fill="none" stroke="#32b47b" stroke-opacity="0.5" stroke-width="2"/><circle cx="540.3" cy="796.7" r="4.6" fill="#32b47b"/><circle cx="628.7" cy="796.6" r="4.6" fill="#32b47b"/><circle cx="717.1" cy="796.3" r="4.6" fill="#32b47b"/><circle cx="805.4" cy="795.5" r="4.6" fill="#32b47b"/><circle cx="893.8" cy="795.3" r="4.6" fill="#32b47b"/><circle cx="982.2" cy="796.6" r="4.6" fill="#32b47b"/><circle cx="1070.6" cy="796.4" r="4.6" fill="#32b47b"/><circle cx="1159.0" cy="796.1" r="4.6" fill="#32b47b"/><circle cx="1247.3" cy="795.7" r="4.6" fill="#32b47b"/><circle cx="1335.7" cy="795.6" r="4.6" fill="#32b47b"/><circle cx="1424.1" cy="796.2" r="4.6" fill="#32b47b"/><circle cx="1512.5" cy="796.0" r="4.6" fill="#32b47b"/><path d="M540.3 786.4 L628.7 787.7 L717.1 786.9 L805.4 787.0 L893.8 787.8 L982.2 786.6 L1070.6 787.1 L1159.0 787.8 L1247.3 787.4 L1335.7 787.0 L1424.1 787.8 L1512.5 787.6" fill="none" stroke="#34b67a" stroke-opacity="0.5" stroke-width="2"/><circle cx="540.3" cy="786.4" r="4.6" fill="#34b67a"/><circle cx="628.7" cy="787.7" r="4.6" fill="#34b67a"/><circle cx="717.1" cy="786.9" r="4.6" fill="#34b67a"/><circle cx="805.4" cy="787.0" r="4.6" fill="#34b67a"/><circle cx="893.8" cy="787.8" r="4.6" fill="#34b67a"/><circle cx="982.2" cy="786.6" r="4.6" fill="#34b67a"/><circle cx="1070.6" cy="787.1" r="4.6" fill="#34b67a"/><circle cx="1159.0" cy="787.8" r="4.6" fill="#34b67a"/><circle cx="1247.3" cy="787.4" r="4.6" fill="#34b67a"/><circle cx="1335.7" cy="787.0" r="4.6" fill="#34b67a"/><circle cx="1424.1" cy="787.8" r="4.6" fill="#34b67a"/><circle cx="1512.5" cy="787.6" r="4.6" fill="#34b67a"/><path d="M540.3 795.2 L628.7 795.3 L717.1 796.0 L805.4 796.1 L893.8 795.0 L982.2 796.1 L1070.6 796.2 L1159.0 795.5 L1247.3 795.6 L1335.7 795.0 L1424.1 795.5 L1512.5 795.5" fill="none" stroke="#34b67a" stroke-opacity="0.5" stroke-width="2"/><circle cx="540.3" cy="795.2" r="4.6" fill="#34b67a"/><circle cx="628.7" cy="795.3" r="4.6" fill="#34b67a"/><circle cx="717.1" cy="796.0" r="4.6" fill="#34b67a"/><circle cx="805.4" cy="796.1" r="4.6" fill="#34b67a"/><circle cx="893.8" cy="795.0" r="4.6" fill="#34b67a"/><circle cx="982.2" cy="796.1" r="4.6" fill="#34b67a"/><circle cx="1070.6" cy="796.2" r="4.6" fill="#34b67a"/><circle cx="1159.0" cy="795.5" r="4.6" fill="#34b67a"/><circle cx="1247.3" cy="795.6" r="4.6" fill="#34b67a"/><circle cx="1335.7" cy="795.0" r="4.6" fill="#34b67a"/><circle cx="1424.1" cy="795.5" r="4.6" fill="#34b67a"/><circle cx="1512.5" cy="795.5" r="4.6" fill="#34b67a"/><path d="M540.3 786.6 L628.7 785.8 L717.1 784.5 L805.4 786.2 L893.8 784.2 L982.2 785.8 L1070.6 784.1 L1159.0 784.3 L1247.3 788.0 L1335.7 783.5 L1424.1 783.3 L1512.5 784.0" fill="none" stroke="#3bba76" stroke-opacity="0.5" stroke-width="2"/><circle cx="540.3" cy="786.6" r="4.6" fill="#3bba76"/><circle cx="628.7" cy="785.8" r="4.6" fill="#3bba76"/><circle cx="717.1" cy="784.5" r="4.6" fill="#3bba76"/><circle cx="805.4" cy="786.2" r="4.6" fill="#3bba76"/><circle cx="893.8" cy="784.2" r="4.6" fill="#3bba76"/><circle cx="982.2" cy="785.8" r="4.6" fill="#3bba76"/><circle cx="1070.6" cy="784.1" r="4.6" fill="#3bba76"/><circle cx="1159.0" cy="784.3" r="4.6" fill="#3bba76"/><circle cx="1247.3" cy="788.0" r="4.6" fill="#3bba76"/><circle cx="1335.7" cy="783.5" r="4.6" fill="#3bba76"/><circle cx="1424.1" cy="783.3" r="4.6" fill="#3bba76"/><circle cx="1512.5" cy="784.0" r="4.6" fill="#3bba76"/><path d="M540.3 794.4 L628.7 793.3 L717.1 794.0 L805.4 794.4 L893.8 793.3 L982.2 793.3 L1070.6 794.3 L1159.0 794.6 L1247.3 793.3 L1335.7 794.2 L1424.1 793.4 L1512.5 794.3" fill="none" stroke="#40bc73" stroke-opacity="0.5" stroke-width="2"/><circle cx="540.3" cy="794.4" r="4.6" fill="#40bc73"/><circle cx="628.7" cy="793.3" r="4.6" fill="#40bc73"/><circle cx="717.1" cy="794.0" r="4.6" fill="#40bc73"/><circle cx="805.4" cy="794.4" r="4.6" fill="#40bc73"/><circle cx="893.8" cy="793.3" r="4.6" fill="#40bc73"/><circle cx="982.2" cy="793.3" r="4.6" fill="#40bc73"/><circle cx="1070.6" cy="794.3" r="4.6" fill="#40bc73"/><circle cx="1159.0" cy="794.6" r="4.6" fill="#40bc73"/><circle cx="1247.3" cy="793.3" r="4.6" fill="#40bc73"/><circle cx="1335.7" cy="794.2" r="4.6" fill="#40bc73"/><circle cx="1424.1" cy="793.4" r="4.6" fill="#40bc73"/><circle cx="1512.5" cy="794.3" r="4.6" fill="#40bc73"/><path d="M540.3 786.9 L628.7 787.4 L717.1 786.9 L805.4 787.5 L893.8 787.6 L982.2 786.8 L1070.6 788.2 L1159.0 787.3 L1247.3 787.5 L1335.7 787.6 L1424.1 787.2 L1512.5 787.1" fill="none" stroke="#41bd72" stroke-opacity="0.5" stroke-width="2"/><circle cx="540.3" cy="786.9" r="4.6" fill="#41bd72"/><circle cx="628.7" cy="787.4" r="4.6" fill="#41bd72"/><circle cx="717.1" cy="786.9" r="4.6" fill="#41bd72"/><circle cx="805.4" cy="787.5" r="4.6" fill="#41bd72"/><circle cx="893.8" cy="787.6" r="4.6" fill="#41bd72"/><circle cx="982.2" cy="786.8" r="4.6" fill="#41bd72"/><circle cx="1070.6" cy="788.2" r="4.6" fill="#41bd72"/><circle cx="1159.0" cy="787.3" r="4.6" fill="#41bd72"/><circle cx="1247.3" cy="787.5" r="4.6" fill="#41bd72"/><circle cx="1335.7" cy="787.6" r="4.6" fill="#41bd72"/><circle cx="1424.1" cy="787.2" r="4.6" fill="#41bd72"/><circle cx="1512.5" cy="787.1" r="4.6" fill="#41bd72"/><path d="M540.3 797.0 L628.7 796.9 L717.1 796.3 L805.4 797.3 L893.8 797.1 L982.2 796.6 L1070.6 796.7 L1159.0 796.9 L1247.3 796.6 L1335.7 796.3 L1424.1 797.7 L1512.5 797.8" fill="none" stroke="#44be71" stroke-opacity="0.5" stroke-width="2"/><circle cx="540.3" cy="797.0" r="4.6" fill="#44be71"/><circle cx="628.7" cy="796.9" r="4.6" fill="#44be71"/><circle cx="717.1" cy="796.3" r="4.6" fill="#44be71"/><circle cx="805.4" cy="797.3" r="4.6" fill="#44be71"/><circle cx="893.8" cy="797.1" r="4.6" fill="#44be71"/><circle cx="982.2" cy="796.6" r="4.6" fill="#44be71"/><circle cx="1070.6" cy="796.7" r="4.6" fill="#44be71"/><circle cx="1159.0" cy="796.9" r="4.6" fill="#44be71"/><circle cx="1247.3" cy="796.6" r="4.6" fill="#44be71"/><circle cx="1335.7" cy="796.3" r="4.6" fill="#44be71"/><circle cx="1424.1" cy="797.7" r="4.6" fill="#44be71"/><circle cx="1512.5" cy="797.8" r="4.6" fill="#44be71"/><path d="M540.3 793.2 L628.7 794.8 L717.1 794.0 L805.4 793.3 L893.8 794.2 L982.2 792.7 L1070.6 793.3 L1159.0 792.0 L1247.3 794.8 L1335.7 793.1 L1424.1 793.2 L1512.5 792.9" fill="none" stroke="#44be70" stroke-opacity="0.5" stroke-width="2"/><circle cx="540.3" cy="793.2" r="4.6" fill="#44be70"/><circle cx="628.7" cy="794.8" r="4.6" fill="#44be70"/><circle cx="717.1" cy="794.0" r="4.6" fill="#44be70"/><circle cx="805.4" cy="793.3" r="4.6" fill="#44be70"/><circle cx="893.8" cy="794.2" r="4.6" fill="#44be70"/><circle cx="982.2" cy="792.7" r="4.6" fill="#44be70"/><circle cx="1070.6" cy="793.3" r="4.6" fill="#44be70"/><circle cx="1159.0" cy="792.0" r="4.6" fill="#44be70"/><circle cx="1247.3" cy="794.8" r="4.6" fill="#44be70"/><circle cx="1335.7" cy="793.1" r="4.6" fill="#44be70"/><circle cx="1424.1" cy="793.2" r="4.6" fill="#44be70"/><circle cx="1512.5" cy="792.9" r="4.6" fill="#44be70"/><path d="M540.3 793.3 L628.7 793.2 L717.1 794.0 L805.4 793.4 L893.8 794.4 L982.2 793.8 L1070.6 794.0 L1159.0 793.4 L1247.3 794.2 L1335.7 793.0 L1424.1 793.1 L1512.5 793.0" fill="none" stroke="#48bf6f" stroke-opacity="0.5" stroke-width="2"/><circle cx="540.3" cy="793.3" r="4.6" fill="#48bf6f"/><circle cx="628.7" cy="793.2" r="4.6" fill="#48bf6f"/><circle cx="717.1" cy="794.0" r="4.6" fill="#48bf6f"/><circle cx="805.4" cy="793.4" r="4.6" fill="#48bf6f"/><circle cx="893.8" cy="794.4" r="4.6" fill="#48bf6f"/><circle cx="982.2" cy="793.8" r="4.6" fill="#48bf6f"/><circle cx="1070.6" cy="794.0" r="4.6" fill="#48bf6f"/><circle cx="1159.0" cy="793.4" r="4.6" fill="#48bf6f"/><circle cx="1247.3" cy="794.2" r="4.6" fill="#48bf6f"/><circle cx="1335.7" cy="793.0" r="4.6" fill="#48bf6f"/><circle cx="1424.1" cy="793.1" r="4.6" fill="#48bf6f"/><circle cx="1512.5" cy="793.0" r="4.6" fill="#48bf6f"/><path d="M540.3 688.0 L628.7 696.0 L717.1 706.4 L805.4 709.0 L893.8 702.0 L982.2 688.0 L1070.6 681.0 L1159.0 678.0 L1247.3 687.0 L1335.7 654.0 L1424.1 639.0 L1512.5 636.0" fill="none" stroke="#4ec26b" stroke-opacity="0.5" stroke-width="2"/><circle cx="540.3" cy="688.0" r="4.6" fill="#4ec26b"/><circle cx="628.7" cy="696.0" r="4.6" fill="#4ec26b"/><circle cx="717.1" cy="706.4" r="4.6" fill="#4ec26b"/><circle cx="805.4" cy="709.0" r="4.6" fill="#4ec26b"/><circle cx="893.8" cy="702.0" r="4.6" fill="#4ec26b"/><circle cx="982.2" cy="688.0" r="4.6" fill="#4ec26b"/><circle cx="1070.6" cy="681.0" r="4.6" fill="#4ec26b"/><circle cx="1159.0" cy="678.0" r="4.6" fill="#4ec26b"/><circle cx="1247.3" cy="687.0" r="4.6" fill="#4ec26b"/><circle cx="1335.7" cy="654.0" r="4.6" fill="#4ec26b"/><circle cx="1424.1" cy="639.0" r="4.6" fill="#4ec26b"/><circle cx="1512.5" cy="636.0" r="4.6" fill="#4ec26b"/><path d="M540.3 791.8 L628.7 793.3 L717.1 793.4 L805.4 793.2 L893.8 792.0 L982.2 792.5 L1070.6 791.3 L1159.0 792.5 L1247.3 793.1 L1335.7 790.9 L1424.1 790.1 L1512.5 790.9" fill="none" stroke="#4ec26b" stroke-opacity="0.5" stroke-width="2"/><circle cx="540.3" cy="791.8" r="4.6" fill="#4ec26b"/><circle cx="628.7" cy="793.3" r="4.6" fill="#4ec26b"/><circle cx="717.1" cy="793.4" r="4.6" fill="#4ec26b"/><circle cx="805.4" cy="793.2" r="4.6" fill="#4ec26b"/><circle cx="893.8" cy="792.0" r="4.6" fill="#4ec26b"/><circle cx="982.2" cy="792.5" r="4.6" fill="#4ec26b"/><circle cx="1070.6" cy="791.3" r="4.6" fill="#4ec26b"/><circle cx="1159.0" cy="792.5" r="4.6" fill="#4ec26b"/><circle cx="1247.3" cy="793.1" r="4.6" fill="#4ec26b"/><circle cx="1335.7" cy="790.9" r="4.6" fill="#4ec26b"/><circle cx="1424.1" cy="790.1" r="4.6" fill="#4ec26b"/><circle cx="1512.5" cy="790.9" r="4.6" fill="#4ec26b"/><path d="M540.3 798.3 L628.7 798.7 L717.1 798.1 L805.4 798.7 L893.8 797.7 L982.2 798.2 L1070.6 798.3 L1159.0 799.1 L1247.3 798.9 L1335.7 798.6 L1424.1 797.6 L1512.5 798.2" fill="none" stroke="#51c36a" stroke-opacity="0.5" stroke-width="2"/><circle cx="540.3" cy="798.3" r="4.6" fill="#51c36a"/><circle cx="628.7" cy="798.7" r="4.6" fill="#51c36a"/><circle cx="717.1" cy="798.1" r="4.6" fill="#51c36a"/><circle cx="805.4" cy="798.7" r="4.6" fill="#51c36a"/><circle cx="893.8" cy="797.7" r="4.6" fill="#51c36a"/><circle cx="982.2" cy="798.2" r="4.6" fill="#51c36a"/><circle cx="1070.6" cy="798.3" r="4.6" fill="#51c36a"/><circle cx="1159.0" cy="799.1" r="4.6" fill="#51c36a"/><circle cx="1247.3" cy="798.9" r="4.6" fill="#51c36a"/><circle cx="1335.7" cy="798.6" r="4.6" fill="#51c36a"/><circle cx="1424.1" cy="797.6" r="4.6" fill="#51c36a"/><circle cx="1512.5" cy="798.2" r="4.6" fill="#51c36a"/><path d="M540.3 790.3 L628.7 791.4 L717.1 791.1 L805.4 791.2 L893.8 791.2 L982.2 790.6 L1070.6 791.4 L1159.0 791.3 L1247.3 791.0 L1335.7 791.1 L1424.1 791.1 L1512.5 790.6" fill="none" stroke="#54c568" stroke-opacity="0.5" stroke-width="2"/><circle cx="540.3" cy="790.3" r="4.6" fill="#54c568"/><circle cx="628.7" cy="791.4" r="4.6" fill="#54c568"/><circle cx="717.1" cy="791.1" r="4.6" fill="#54c568"/><circle cx="805.4" cy="791.2" r="4.6" fill="#54c568"/><circle cx="893.8" cy="791.2" r="4.6" fill="#54c568"/><circle cx="982.2" cy="790.6" r="4.6" fill="#54c568"/><circle cx="1070.6" cy="791.4" r="4.6" fill="#54c568"/><circle cx="1159.0" cy="791.3" r="4.6" fill="#54c568"/><circle cx="1247.3" cy="791.0" r="4.6" fill="#54c568"/><circle cx="1335.7" cy="791.1" r="4.6" fill="#54c568"/><circle cx="1424.1" cy="791.1" r="4.6" fill="#54c568"/><circle cx="1512.5" cy="790.6" r="4.6" fill="#54c568"/><path d="M540.3 715.0 L628.7 708.0 L717.1 716.0 L805.4 718.0 L893.8 720.0 L982.2 723.0 L1070.6 729.0 L1159.0 728.0 L1247.3 741.0 L1335.7 737.0 L1424.1 735.6 L1512.5 737.5" fill="none" stroke="#58c666" stroke-opacity="0.5" stroke-width="2"/><circle cx="540.3" cy="715.0" r="4.6" fill="#58c666"/><circle cx="628.7" cy="708.0" r="4.6" fill="#58c666"/><circle cx="717.1" cy="716.0" r="4.6" fill="#58c666"/><circle cx="805.4" cy="718.0" r="4.6" fill="#58c666"/><circle cx="893.8" cy="720.0" r="4.6" fill="#58c666"/><circle cx="982.2" cy="723.0" r="4.6" fill="#58c666"/><circle cx="1070.6" cy="729.0" r="4.6" fill="#58c666"/><circle cx="1159.0" cy="728.0" r="4.6" fill="#58c666"/><circle cx="1247.3" cy="741.0" r="4.6" fill="#58c666"/><circle cx="1335.7" cy="737.0" r="4.6" fill="#58c666"/><circle cx="1424.1" cy="735.6" r="4.6" fill="#58c666"/><circle cx="1512.5" cy="737.5" r="4.6" fill="#58c666"/><path d="M540.3 786.8 L628.7 787.3 L717.1 786.6 L805.4 786.8 L893.8 786.9 L982.2 786.7 L1070.6 787.0 L1159.0 786.1 L1247.3 787.2 L1335.7 787.4 L1424.1 786.3 L1512.5 786.8" fill="none" stroke="#5ac764" stroke-opacity="0.5" stroke-width="2"/><circle cx="540.3" cy="786.8" r="4.6" fill="#5ac764"/><circle cx="628.7" cy="787.3" r="4.6" fill="#5ac764"/><circle cx="717.1" cy="786.6" r="4.6" fill="#5ac764"/><circle cx="805.4" cy="786.8" r="4.6" fill="#5ac764"/><circle cx="893.8" cy="786.9" r="4.6" fill="#5ac764"/><circle cx="982.2" cy="786.7" r="4.6" fill="#5ac764"/><circle cx="1070.6" cy="787.0" r="4.6" fill="#5ac764"/><circle cx="1159.0" cy="786.1" r="4.6" fill="#5ac764"/><circle cx="1247.3" cy="787.2" r="4.6" fill="#5ac764"/><circle cx="1335.7" cy="787.4" r="4.6" fill="#5ac764"/><circle cx="1424.1" cy="786.3" r="4.6" fill="#5ac764"/><circle cx="1512.5" cy="786.8" r="4.6" fill="#5ac764"/><path d="M540.3 795.6 L628.7 794.8 L717.1 794.3 L805.4 795.0 L893.8 795.7 L982.2 795.6 L1070.6 795.1 L1159.0 795.6 L1247.3 795.3 L1335.7 793.5 L1424.1 794.0 L1512.5 793.5" fill="none" stroke="#5ec862" stroke-opacity="0.5" stroke-width="2"/><circle cx="540.3" cy="795.6" r="4.6" fill="#5ec862"/><circle cx="628.7" cy="794.8" r="4.6" fill="#5ec862"/><circle cx="717.1" cy="794.3" r="4.6" fill="#5ec862"/><circle cx="805.4" cy="795.0" r="4.6" fill="#5ec862"/><circle cx="893.8" cy="795.7" r="4.6" fill="#5ec862"/><circle cx="982.2" cy="795.6" r="4.6" fill="#5ec862"/><circle cx="1070.6" cy="795.1" r="4.6" fill="#5ec862"/><circle cx="1159.0" cy="795.6" r="4.6" fill="#5ec862"/><circle cx="1247.3" cy="795.3" r="4.6" fill="#5ec862"/><circle cx="1335.7" cy="793.5" r="4.6" fill="#5ec862"/><circle cx="1424.1" cy="794.0" r="4.6" fill="#5ec862"/><circle cx="1512.5" cy="793.5" r="4.6" fill="#5ec862"/><path d="M717.1 678.1 L805.4 628.9 L893.8 614.0 L982.2 598.1 L1070.6 592.8 L1159.0 570.5 L1247.3 582.7 L1335.7 571.8 L1424.1 563.5 L1512.5 563.0" fill="none" stroke="#63ca5f" stroke-opacity="0.5" stroke-width="2"/><circle cx="717.1" cy="678.1" r="4.6" fill="#63ca5f"/><circle cx="805.4" cy="628.9" r="4.6" fill="#63ca5f"/><circle cx="893.8" cy="614.0" r="4.6" fill="#63ca5f"/><circle cx="982.2" cy="598.1" r="4.6" fill="#63ca5f"/><circle cx="1070.6" cy="592.8" r="4.6" fill="#63ca5f"/><circle cx="1159.0" cy="570.5" r="4.6" fill="#63ca5f"/><circle cx="1247.3" cy="582.7" r="4.6" fill="#63ca5f"/><circle cx="1335.7" cy="571.8" r="4.6" fill="#63ca5f"/><circle cx="1424.1" cy="563.5" r="4.6" fill="#63ca5f"/><circle cx="1512.5" cy="563.0" r="4.6" fill="#63ca5f"/><path d="M540.3 799.4 L628.7 799.4 L717.1 799.0 L805.4 798.7 L893.8 798.7 L982.2 799.1 L1070.6 798.9 L1159.0 799.4 L1247.3 798.5 L1335.7 798.9 L1424.1 798.6 L1512.5 799.4" fill="none" stroke="#66cb5d" stroke-opacity="0.5" stroke-width="2"/><circle cx="540.3" cy="799.4" r="4.6" fill="#66cb5d"/><circle cx="628.7" cy="799.4" r="4.6" fill="#66cb5d"/><circle cx="717.1" cy="799.0" r="4.6" fill="#66cb5d"/><circle cx="805.4" cy="798.7" r="4.6" fill="#66cb5d"/><circle cx="893.8" cy="798.7" r="4.6" fill="#66cb5d"/><circle cx="982.2" cy="799.1" r="4.6" fill="#66cb5d"/><circle cx="1070.6" cy="798.9" r="4.6" fill="#66cb5d"/><circle cx="1159.0" cy="799.4" r="4.6" fill="#66cb5d"/><circle cx="1247.3" cy="798.5" r="4.6" fill="#66cb5d"/><circle cx="1335.7" cy="798.9" r="4.6" fill="#66cb5d"/><circle cx="1424.1" cy="798.6" r="4.6" fill="#66cb5d"/><circle cx="1512.5" cy="799.4" r="4.6" fill="#66cb5d"/><path d="M540.3 799.4 L628.7 799.2 L717.1 798.8 L805.4 798.6 L893.8 799.3 L982.2 798.7 L1070.6 799.2 L1159.0 799.4 L1247.3 799.2 L1335.7 798.9 L1424.1 799.4 L1512.5 799.2" fill="none" stroke="#67cb5c" stroke-opacity="0.5" stroke-width="2"/><circle cx="540.3" cy="799.4" r="4.6" fill="#67cb5c"/><circle cx="628.7" cy="799.2" r="4.6" fill="#67cb5c"/><circle cx="717.1" cy="798.8" r="4.6" fill="#67cb5c"/><circle cx="805.4" cy="798.6" r="4.6" fill="#67cb5c"/><circle cx="893.8" cy="799.3" r="4.6" fill="#67cb5c"/><circle cx="982.2" cy="798.7" r="4.6" fill="#67cb5c"/><circle cx="1070.6" cy="799.2" r="4.6" fill="#67cb5c"/><circle cx="1159.0" cy="799.4" r="4.6" fill="#67cb5c"/><circle cx="1247.3" cy="799.2" r="4.6" fill="#67cb5c"/><circle cx="1335.7" cy="798.9" r="4.6" fill="#67cb5c"/><circle cx="1424.1" cy="799.4" r="4.6" fill="#67cb5c"/><circle cx="1512.5" cy="799.2" r="4.6" fill="#67cb5c"/><path d="M540.3 798.0 L628.7 799.0 L717.1 797.8 L805.4 799.1 L893.8 798.9 L982.2 797.7 L1070.6 797.9 L1159.0 798.7 L1247.3 797.9 L1335.7 797.6 L1424.1 798.8 L1512.5 798.2" fill="none" stroke="#6bcc5a" stroke-opacity="0.5" stroke-width="2"/><circle cx="540.3" cy="798.0" r="4.6" fill="#6bcc5a"/><circle cx="628.7" cy="799.0" r="4.6" fill="#6bcc5a"/><circle cx="717.1" cy="797.8" r="4.6" fill="#6bcc5a"/><circle cx="805.4" cy="799.1" r="4.6" fill="#6bcc5a"/><circle cx="893.8" cy="798.9" r="4.6" fill="#6bcc5a"/><circle cx="982.2" cy="797.7" r="4.6" fill="#6bcc5a"/><circle cx="1070.6" cy="797.9" r="4.6" fill="#6bcc5a"/><circle cx="1159.0" cy="798.7" r="4.6" fill="#6bcc5a"/><circle cx="1247.3" cy="797.9" r="4.6" fill="#6bcc5a"/><circle cx="1335.7" cy="797.6" r="4.6" fill="#6bcc5a"/><circle cx="1424.1" cy="798.8" r="4.6" fill="#6bcc5a"/><circle cx="1512.5" cy="798.2" r="4.6" fill="#6bcc5a"/><path d="M540.3 474.6 L628.7 437.5 L717.1 523.0 L805.4 555.0 L893.8 581.0 L982.2 598.0 L1070.6 610.3 L1159.0 624.4 L1247.3 677.0 L1335.7 646.0 L1424.1 664.6 L1512.5 667.0" fill="none" stroke="#6fcd58" stroke-opacity="0.5" stroke-width="2"/><circle cx="540.3" cy="474.6" r="4.6" fill="#6fcd58"/><circle cx="628.7" cy="437.5" r="4.6" fill="#6fcd58"/><circle cx="717.1" cy="523.0" r="4.6" fill="#6fcd58"/><circle cx="805.4" cy="555.0" r="4.6" fill="#6fcd58"/><circle cx="893.8" cy="581.0" r="4.6" fill="#6fcd58"/><circle cx="982.2" cy="598.0" r="4.6" fill="#6fcd58"/><circle cx="1070.6" cy="610.3" r="4.6" fill="#6fcd58"/><circle cx="1159.0" cy="624.4" r="4.6" fill="#6fcd58"/><circle cx="1247.3" cy="677.0" r="4.6" fill="#6fcd58"/><circle cx="1335.7" cy="646.0" r="4.6" fill="#6fcd58"/><circle cx="1424.1" cy="664.6" r="4.6" fill="#6fcd58"/><circle cx="1512.5" cy="667.0" r="4.6" fill="#6fcd58"/><path d="M540.3 768.3 L628.7 766.4 L717.1 765.0 L805.4 762.8 L893.8 762.9 L982.2 760.4 L1070.6 759.9 L1159.0 757.2 L1247.3 762.5 L1335.7 755.1 L1424.1 751.4 L1512.5 750.3" fill="none" stroke="#6fcd58" stroke-opacity="0.5" stroke-width="2"/><circle cx="540.3" cy="768.3" r="4.6" fill="#6fcd58"/><circle cx="628.7" cy="766.4" r="4.6" fill="#6fcd58"/><circle cx="717.1" cy="765.0" r="4.6" fill="#6fcd58"/><circle cx="805.4" cy="762.8" r="4.6" fill="#6fcd58"/><circle cx="893.8" cy="762.9" r="4.6" fill="#6fcd58"/><circle cx="982.2" cy="760.4" r="4.6" fill="#6fcd58"/><circle cx="1070.6" cy="759.9" r="4.6" fill="#6fcd58"/><circle cx="1159.0" cy="757.2" r="4.6" fill="#6fcd58"/><circle cx="1247.3" cy="762.5" r="4.6" fill="#6fcd58"/><circle cx="1335.7" cy="755.1" r="4.6" fill="#6fcd58"/><circle cx="1424.1" cy="751.4" r="4.6" fill="#6fcd58"/><circle cx="1512.5" cy="750.3" r="4.6" fill="#6fcd58"/><path d="M540.3 798.7 L628.7 799.4 L717.1 799.4 L805.4 799.4 L893.8 799.2 L982.2 799.3 L1070.6 798.9 L1159.0 799.1 L1247.3 799.4 L1335.7 799.4 L1424.1 798.7 L1512.5 798.7" fill="none" stroke="#72ce56" stroke-opacity="0.5" stroke-width="2"/><circle cx="540.3" cy="798.7" r="4.6" fill="#72ce56"/><circle cx="628.7" cy="799.4" r="4.6" fill="#72ce56"/><circle cx="717.1" cy="799.4" r="4.6" fill="#72ce56"/><circle cx="805.4" cy="799.4" r="4.6" fill="#72ce56"/><circle cx="893.8" cy="799.2" r="4.6" fill="#72ce56"/><circle cx="982.2" cy="799.3" r="4.6" fill="#72ce56"/><circle cx="1070.6" cy="798.9" r="4.6" fill="#72ce56"/><circle cx="1159.0" cy="799.1" r="4.6" fill="#72ce56"/><circle cx="1247.3" cy="799.4" r="4.6" fill="#72ce56"/><circle cx="1335.7" cy="799.4" r="4.6" fill="#72ce56"/><circle cx="1424.1" cy="798.7" r="4.6" fill="#72ce56"/><circle cx="1512.5" cy="798.7" r="4.6" fill="#72ce56"/><path d="M540.3 779.4 L628.7 779.0 L717.1 779.2 L805.4 781.8 L893.8 780.5 L982.2 782.0 L1070.6 781.3 L1159.0 783.0 L1247.3 785.7 L1335.7 782.5 L1424.1 782.5 L1512.5 784.2" fill="none" stroke="#7ad151" stroke-opacity="0.5" stroke-width="2"/><circle cx="540.3" cy="779.4" r="4.6" fill="#7ad151"/><circle cx="628.7" cy="779.0" r="4.6" fill="#7ad151"/><circle cx="717.1" cy="779.2" r="4.6" fill="#7ad151"/><circle cx="805.4" cy="781.8" r="4.6" fill="#7ad151"/><circle cx="893.8" cy="780.5" r="4.6" fill="#7ad151"/><circle cx="982.2" cy="782.0" r="4.6" fill="#7ad151"/><circle cx="1070.6" cy="781.3" r="4.6" fill="#7ad151"/><circle cx="1159.0" cy="783.0" r="4.6" fill="#7ad151"/><circle cx="1247.3" cy="785.7" r="4.6" fill="#7ad151"/><circle cx="1335.7" cy="782.5" r="4.6" fill="#7ad151"/><circle cx="1424.1" cy="782.5" r="4.6" fill="#7ad151"/><circle cx="1512.5" cy="784.2" r="4.6" fill="#7ad151"/><path d="M540.3 790.7 L628.7 792.0 L717.1 792.1 L805.4 792.0 L893.8 790.8 L982.2 791.1 L1070.6 791.9 L1159.0 790.9 L1247.3 791.5 L1335.7 791.5 L1424.1 792.2 L1512.5 791.7" fill="none" stroke="#83d34b" stroke-opacity="0.5" stroke-width="2"/><circle cx="540.3" cy="790.7" r="4.6" fill="#83d34b"/><circle cx="628.7" cy="792.0" r="4.6" fill="#83d34b"/><circle cx="717.1" cy="792.1" r="4.6" fill="#83d34b"/><circle cx="805.4" cy="792.0" r="4.6" fill="#83d34b"/><circle cx="893.8" cy="790.8" r="4.6" fill="#83d34b"/><circle cx="982.2" cy="791.1" r="4.6" fill="#83d34b"/><circle cx="1070.6" cy="791.9" r="4.6" fill="#83d34b"/><circle cx="1159.0" cy="790.9" r="4.6" fill="#83d34b"/><circle cx="1247.3" cy="791.5" r="4.6" fill="#83d34b"/><circle cx="1335.7" cy="791.5" r="4.6" fill="#83d34b"/><circle cx="1424.1" cy="792.2" r="4.6" fill="#83d34b"/><circle cx="1512.5" cy="791.7" r="4.6" fill="#83d34b"/><path d="M540.3 797.4 L628.7 796.9 L717.1 796.9 L805.4 797.6 L893.8 797.6 L982.2 797.4 L1070.6 798.0 L1159.0 797.6 L1247.3 798.0 L1335.7 797.0 L1424.1 797.8 L1512.5 797.9" fill="none" stroke="#95d740" stroke-opacity="0.5" stroke-width="2"/><circle cx="540.3" cy="797.4" r="4.6" fill="#95d740"/><circle cx="628.7" cy="796.9" r="4.6" fill="#95d740"/><circle cx="717.1" cy="796.9" r="4.6" fill="#95d740"/><circle cx="805.4" cy="797.6" r="4.6" fill="#95d740"/><circle cx="893.8" cy="797.6" r="4.6" fill="#95d740"/><circle cx="982.2" cy="797.4" r="4.6" fill="#95d740"/><circle cx="1070.6" cy="798.0" r="4.6" fill="#95d740"/><circle cx="1159.0" cy="797.6" r="4.6" fill="#95d740"/><circle cx="1247.3" cy="798.0" r="4.6" fill="#95d740"/><circle cx="1335.7" cy="797.0" r="4.6" fill="#95d740"/><circle cx="1424.1" cy="797.8" r="4.6" fill="#95d740"/><circle cx="1512.5" cy="797.9" r="4.6" fill="#95d740"/><path d="M540.3 792.8 L628.7 793.8 L717.1 792.8 L805.4 793.0 L893.8 792.5 L982.2 793.8 L1070.6 792.5 L1159.0 793.7 L1247.3 793.1 L1335.7 793.2 L1424.1 793.2 L1512.5 792.7" fill="none" stroke="#97d83f" stroke-opacity="0.5" stroke-width="2"/><circle cx="540.3" cy="792.8" r="4.6" fill="#97d83f"/><circle cx="628.7" cy="793.8" r="4.6" fill="#97d83f"/><circle cx="717.1" cy="792.8" r="4.6" fill="#97d83f"/><circle cx="805.4" cy="793.0" r="4.6" fill="#97d83f"/><circle cx="893.8" cy="792.5" r="4.6" fill="#97d83f"/><circle cx="982.2" cy="793.8" r="4.6" fill="#97d83f"/><circle cx="1070.6" cy="792.5" r="4.6" fill="#97d83f"/><circle cx="1159.0" cy="793.7" r="4.6" fill="#97d83f"/><circle cx="1247.3" cy="793.1" r="4.6" fill="#97d83f"/><circle cx="1335.7" cy="793.2" r="4.6" fill="#97d83f"/><circle cx="1424.1" cy="793.2" r="4.6" fill="#97d83f"/><circle cx="1512.5" cy="792.7" r="4.6" fill="#97d83f"/><path d="M540.3 798.3 L628.7 799.2 L717.1 798.8 L805.4 799.2 L893.8 798.6 L982.2 798.5 L1070.6 799.4 L1159.0 799.0 L1247.3 798.8 L1335.7 798.8 L1424.1 799.1 L1512.5 799.1" fill="none" stroke="#9ad83d" stroke-opacity="0.5" stroke-width="2"/><circle cx="540.3" cy="798.3" r="4.6" fill="#9ad83d"/><circle cx="628.7" cy="799.2" r="4.6" fill="#9ad83d"/><circle cx="717.1" cy="798.8" r="4.6" fill="#9ad83d"/><circle cx="805.4" cy="799.2" r="4.6" fill="#9ad83d"/><circle cx="893.8" cy="798.6" r="4.6" fill="#9ad83d"/><circle cx="982.2" cy="798.5" r="4.6" fill="#9ad83d"/><circle cx="1070.6" cy="799.4" r="4.6" fill="#9ad83d"/><circle cx="1159.0" cy="799.0" r="4.6" fill="#9ad83d"/><circle cx="1247.3" cy="798.8" r="4.6" fill="#9ad83d"/><circle cx="1335.7" cy="798.8" r="4.6" fill="#9ad83d"/><circle cx="1424.1" cy="799.1" r="4.6" fill="#9ad83d"/><circle cx="1512.5" cy="799.1" r="4.6" fill="#9ad83d"/><path d="M540.3 790.9 L628.7 792.1 L717.1 791.6 L805.4 790.8 L893.8 791.7 L982.2 791.1 L1070.6 791.2 L1159.0 791.7 L1247.3 791.0 L1335.7 789.2 L1424.1 789.7 L1512.5 790.4" fill="none" stroke="#9ad83d" stroke-opacity="0.5" stroke-width="2"/><circle cx="540.3" cy="790.9" r="4.6" fill="#9ad83d"/><circle cx="628.7" cy="792.1" r="4.6" fill="#9ad83d"/><circle cx="717.1" cy="791.6" r="4.6" fill="#9ad83d"/><circle cx="805.4" cy="790.8" r="4.6" fill="#9ad83d"/><circle cx="893.8" cy="791.7" r="4.6" fill="#9ad83d"/><circle cx="982.2" cy="791.1" r="4.6" fill="#9ad83d"/><circle cx="1070.6" cy="791.2" r="4.6" fill="#9ad83d"/><circle cx="1159.0" cy="791.7" r="4.6" fill="#9ad83d"/><circle cx="1247.3" cy="791.0" r="4.6" fill="#9ad83d"/><circle cx="1335.7" cy="789.2" r="4.6" fill="#9ad83d"/><circle cx="1424.1" cy="789.7" r="4.6" fill="#9ad83d"/><circle cx="1512.5" cy="790.4" r="4.6" fill="#9ad83d"/><path d="M540.3 552.6 L628.7 540.4 L717.1 548.0 L805.4 552.0 L893.8 551.7 L982.2 563.0 L1070.6 573.5 L1159.0 585.3 L1247.3 640.0 L1335.7 622.8 L1424.1 647.3 L1512.5 656.5" fill="none" stroke="#a1da39" stroke-opacity="0.5" stroke-width="2"/><circle cx="540.3" cy="552.6" r="4.6" fill="#a1da39"/><circle cx="628.7" cy="540.4" r="4.6" fill="#a1da39"/><circle cx="717.1" cy="548.0" r="4.6" fill="#a1da39"/><circle cx="805.4" cy="552.0" r="4.6" fill="#a1da39"/><circle cx="893.8" cy="551.7" r="4.6" fill="#a1da39"/><circle cx="982.2" cy="563.0" r="4.6" fill="#a1da39"/><circle cx="1070.6" cy="573.5" r="4.6" fill="#a1da39"/><circle cx="1159.0" cy="585.3" r="4.6" fill="#a1da39"/><circle cx="1247.3" cy="640.0" r="4.6" fill="#a1da39"/><circle cx="1335.7" cy="622.8" r="4.6" fill="#a1da39"/><circle cx="1424.1" cy="647.3" r="4.6" fill="#a1da39"/><circle cx="1512.5" cy="656.5" r="4.6" fill="#a1da39"/><path d="M540.3 798.1 L628.7 797.7 L717.1 799.0 L805.4 798.9 L893.8 798.3 L982.2 798.2 L1070.6 798.6 L1159.0 797.7 L1247.3 797.7 L1335.7 799.1 L1424.1 798.1 L1512.5 798.4" fill="none" stroke="#a1da39" stroke-opacity="0.5" stroke-width="2"/><circle cx="540.3" cy="798.1" r="4.6" fill="#a1da39"/><circle cx="628.7" cy="797.7" r="4.6" fill="#a1da39"/><circle cx="717.1" cy="799.0" r="4.6" fill="#a1da39"/><circle cx="805.4" cy="798.9" r="4.6" fill="#a1da39"/><circle cx="893.8" cy="798.3" r="4.6" fill="#a1da39"/><circle cx="982.2" cy="798.2" r="4.6" fill="#a1da39"/><circle cx="1070.6" cy="798.6" r="4.6" fill="#a1da39"/><circle cx="1159.0" cy="797.7" r="4.6" fill="#a1da39"/><circle cx="1247.3" cy="797.7" r="4.6" fill="#a1da39"/><circle cx="1335.7" cy="799.1" r="4.6" fill="#a1da39"/><circle cx="1424.1" cy="798.1" r="4.6" fill="#a1da39"/><circle cx="1512.5" cy="798.4" r="4.6" fill="#a1da39"/><path d="M540.3 795.9 L628.7 795.5 L717.1 796.0 L805.4 795.5 L893.8 794.9 L982.2 795.8 L1070.6 796.0 L1159.0 795.1 L1247.3 794.7 L1335.7 795.5 L1424.1 795.5 L1512.5 795.5" fill="none" stroke="#aedc31" stroke-opacity="0.5" stroke-width="2"/><circle cx="540.3" cy="795.9" r="4.6" fill="#aedc31"/><circle cx="628.7" cy="795.5" r="4.6" fill="#aedc31"/><circle cx="717.1" cy="796.0" r="4.6" fill="#aedc31"/><circle cx="805.4" cy="795.5" r="4.6" fill="#aedc31"/><circle cx="893.8" cy="794.9" r="4.6" fill="#aedc31"/><circle cx="982.2" cy="795.8" r="4.6" fill="#aedc31"/><circle cx="1070.6" cy="796.0" r="4.6" fill="#aedc31"/><circle cx="1159.0" cy="795.1" r="4.6" fill="#aedc31"/><circle cx="1247.3" cy="794.7" r="4.6" fill="#aedc31"/><circle cx="1335.7" cy="795.5" r="4.6" fill="#aedc31"/><circle cx="1424.1" cy="795.5" r="4.6" fill="#aedc31"/><circle cx="1512.5" cy="795.5" r="4.6" fill="#aedc31"/><path d="M540.3 786.9 L628.7 784.7 L717.1 786.2 L805.4 785.9 L893.8 786.6 L982.2 785.6 L1070.6 787.3 L1159.0 785.2 L1247.3 788.1 L1335.7 786.9 L1424.1 787.3 L1512.5 787.0" fill="none" stroke="#aedc31" stroke-opacity="0.5" stroke-width="2"/><circle cx="540.3" cy="786.9" r="4.6" fill="#aedc31"/><circle cx="628.7" cy="784.7" r="4.6" fill="#aedc31"/><circle cx="717.1" cy="786.2" r="4.6" fill="#aedc31"/><circle cx="805.4" cy="785.9" r="4.6" fill="#aedc31"/><circle cx="893.8" cy="786.6" r="4.6" fill="#aedc31"/><circle cx="982.2" cy="785.6" r="4.6" fill="#aedc31"/><circle cx="1070.6" cy="787.3" r="4.6" fill="#aedc31"/><circle cx="1159.0" cy="785.2" r="4.6" fill="#aedc31"/><circle cx="1247.3" cy="788.1" r="4.6" fill="#aedc31"/><circle cx="1335.7" cy="786.9" r="4.6" fill="#aedc31"/><circle cx="1424.1" cy="787.3" r="4.6" fill="#aedc31"/><circle cx="1512.5" cy="787.0" r="4.6" fill="#aedc31"/><path d="M540.3 797.0 L628.7 796.9 L717.1 797.5 L805.4 796.7 L893.8 798.1 L982.2 798.0 L1070.6 797.8 L1159.0 798.1 L1247.3 797.7 L1335.7 797.3 L1424.1 797.6 L1512.5 797.5" fill="none" stroke="#b4dd2d" stroke-opacity="0.5" stroke-width="2"/><circle cx="540.3" cy="797.0" r="4.6" fill="#b4dd2d"/><circle cx="628.7" cy="796.9" r="4.6" fill="#b4dd2d"/><circle cx="717.1" cy="797.5" r="4.6" fill="#b4dd2d"/><circle cx="805.4" cy="796.7" r="4.6" fill="#b4dd2d"/><circle cx="893.8" cy="798.1" r="4.6" fill="#b4dd2d"/><circle cx="982.2" cy="798.0" r="4.6" fill="#b4dd2d"/><circle cx="1070.6" cy="797.8" r="4.6" fill="#b4dd2d"/><circle cx="1159.0" cy="798.1" r="4.6" fill="#b4dd2d"/><circle cx="1247.3" cy="797.7" r="4.6" fill="#b4dd2d"/><circle cx="1335.7" cy="797.3" r="4.6" fill="#b4dd2d"/><circle cx="1424.1" cy="797.6" r="4.6" fill="#b4dd2d"/><circle cx="1512.5" cy="797.5" r="4.6" fill="#b4dd2d"/><path d="M540.3 795.1 L628.7 795.8 L717.1 795.2 L805.4 794.7 L893.8 795.1 L982.2 794.7 L1070.6 794.9 L1159.0 795.9 L1247.3 795.3 L1335.7 796.1 L1424.1 795.9 L1512.5 794.8" fill="none" stroke="#b7de2b" stroke-opacity="0.5" stroke-width="2"/><circle cx="540.3" cy="795.1" r="4.6" fill="#b7de2b"/><circle cx="628.7" cy="795.8" r="4.6" fill="#b7de2b"/><circle cx="717.1" cy="795.2" r="4.6" fill="#b7de2b"/><circle cx="805.4" cy="794.7" r="4.6" fill="#b7de2b"/><circle cx="893.8" cy="795.1" r="4.6" fill="#b7de2b"/><circle cx="982.2" cy="794.7" r="4.6" fill="#b7de2b"/><circle cx="1070.6" cy="794.9" r="4.6" fill="#b7de2b"/><circle cx="1159.0" cy="795.9" r="4.6" fill="#b7de2b"/><circle cx="1247.3" cy="795.3" r="4.6" fill="#b7de2b"/><circle cx="1335.7" cy="796.1" r="4.6" fill="#b7de2b"/><circle cx="1424.1" cy="795.9" r="4.6" fill="#b7de2b"/><circle cx="1512.5" cy="794.8" r="4.6" fill="#b7de2b"/><path d="M540.3 769.9 L628.7 769.9 L717.1 767.2 L805.4 765.2 L893.8 765.2 L982.2 764.3 L1070.6 761.8 L1159.0 760.1 L1247.3 761.0 L1335.7 759.7 L1424.1 757.9 L1512.5 755.1" fill="none" stroke="#bcde28" stroke-opacity="0.5" stroke-width="2"/><circle cx="540.3" cy="769.9" r="4.6" fill="#bcde28"/><circle cx="628.7" cy="769.9" r="4.6" fill="#bcde28"/><circle cx="717.1" cy="767.2" r="4.6" fill="#bcde28"/><circle cx="805.4" cy="765.2" r="4.6" fill="#bcde28"/><circle cx="893.8" cy="765.2" r="4.6" fill="#bcde28"/><circle cx="982.2" cy="764.3" r="4.6" fill="#bcde28"/><circle cx="1070.6" cy="761.8" r="4.6" fill="#bcde28"/><circle cx="1159.0" cy="760.1" r="4.6" fill="#bcde28"/><circle cx="1247.3" cy="761.0" r="4.6" fill="#bcde28"/><circle cx="1335.7" cy="759.7" r="4.6" fill="#bcde28"/><circle cx="1424.1" cy="757.9" r="4.6" fill="#bcde28"/><circle cx="1512.5" cy="755.1" r="4.6" fill="#bcde28"/><path d="M540.3 763.1 L628.7 763.2 L717.1 764.3 L805.4 763.7 L893.8 764.2 L982.2 764.0 L1070.6 764.6 L1159.0 764.2 L1247.3 779.3 L1335.7 765.9 L1424.1 766.0 L1512.5 765.8" fill="none" stroke="#dde31e" stroke-opacity="0.5" stroke-width="2"/><circle cx="540.3" cy="763.1" r="4.6" fill="#dde31e"/><circle cx="628.7" cy="763.2" r="4.6" fill="#dde31e"/><circle cx="717.1" cy="764.3" r="4.6" fill="#dde31e"/><circle cx="805.4" cy="763.7" r="4.6" fill="#dde31e"/><circle cx="893.8" cy="764.2" r="4.6" fill="#dde31e"/><circle cx="982.2" cy="764.0" r="4.6" fill="#dde31e"/><circle cx="1070.6" cy="764.6" r="4.6" fill="#dde31e"/><circle cx="1159.0" cy="764.2" r="4.6" fill="#dde31e"/><circle cx="1247.3" cy="779.3" r="4.6" fill="#dde31e"/><circle cx="1335.7" cy="765.9" r="4.6" fill="#dde31e"/><circle cx="1424.1" cy="766.0" r="4.6" fill="#dde31e"/><circle cx="1512.5" cy="765.8" r="4.6" fill="#dde31e"/><path d="M540.3 781.0 L628.7 780.3 L717.1 779.5 L805.4 777.4 L893.8 775.1 L982.2 775.1 L1070.6 771.9 L1159.0 769.9 L1247.3 781.6 L1335.7 767.9 L1424.1 765.5 L1512.5 764.2" fill="none" stroke="#e3e41f" stroke-opacity="0.5" stroke-width="2"/><circle cx="540.3" cy="781.0" r="4.6" fill="#e3e41f"/><circle cx="628.7" cy="780.3" r="4.6" fill="#e3e41f"/><circle cx="717.1" cy="779.5" r="4.6" fill="#e3e41f"/><circle cx="805.4" cy="777.4" r="4.6" fill="#e3e41f"/><circle cx="893.8" cy="775.1" r="4.6" fill="#e3e41f"/><circle cx="982.2" cy="775.1" r="4.6" fill="#e3e41f"/><circle cx="1070.6" cy="771.9" r="4.6" fill="#e3e41f"/><circle cx="1159.0" cy="769.9" r="4.6" fill="#e3e41f"/><circle cx="1247.3" cy="781.6" r="4.6" fill="#e3e41f"/><circle cx="1335.7" cy="767.9" r="4.6" fill="#e3e41f"/><circle cx="1424.1" cy="765.5" r="4.6" fill="#e3e41f"/><circle cx="1512.5" cy="764.2" r="4.6" fill="#e3e41f"/><path d="M540.3 759.0 L628.7 757.0 L717.1 756.7 L805.4 756.7 L893.8 755.8 L982.2 755.4 L1070.6 753.5 L1159.0 753.3 L1247.3 759.5 L1335.7 752.0 L1424.1 751.5 L1512.5 750.3" fill="none" stroke="#eae520" stroke-opacity="0.5" stroke-width="2"/><circle cx="540.3" cy="759.0" r="4.6" fill="#eae520"/><circle cx="628.7" cy="757.0" r="4.6" fill="#eae520"/><circle cx="717.1" cy="756.7" r="4.6" fill="#eae520"/><circle cx="805.4" cy="756.7" r="4.6" fill="#eae520"/><circle cx="893.8" cy="755.8" r="4.6" fill="#eae520"/><circle cx="982.2" cy="755.4" r="4.6" fill="#eae520"/><circle cx="1070.6" cy="753.5" r="4.6" fill="#eae520"/><circle cx="1159.0" cy="753.3" r="4.6" fill="#eae520"/><circle cx="1247.3" cy="759.5" r="4.6" fill="#eae520"/><circle cx="1335.7" cy="752.0" r="4.6" fill="#eae520"/><circle cx="1424.1" cy="751.5" r="4.6" fill="#eae520"/><circle cx="1512.5" cy="750.3" r="4.6" fill="#eae520"/><path d="M540.3 761.3 L628.7 758.1 L717.1 758.7 L805.4 757.1 L893.8 754.7 L982.2 753.0 L1070.6 750.3 L1159.0 748.3 L1247.3 752.3 L1335.7 745.2 L1424.1 743.9 L1512.5 742.4" fill="none" stroke="#f0e622" stroke-opacity="0.5" stroke-width="2"/><circle cx="540.3" cy="761.3" r="4.6" fill="#f0e622"/><circle cx="628.7" cy="758.1" r="4.6" fill="#f0e622"/><circle cx="717.1" cy="758.7" r="4.6" fill="#f0e622"/><circle cx="805.4" cy="757.1" r="4.6" fill="#f0e622"/><circle cx="893.8" cy="754.7" r="4.6" fill="#f0e622"/><circle cx="982.2" cy="753.0" r="4.6" fill="#f0e622"/><circle cx="1070.6" cy="750.3" r="4.6" fill="#f0e622"/><circle cx="1159.0" cy="748.3" r="4.6" fill="#f0e622"/><circle cx="1247.3" cy="752.3" r="4.6" fill="#f0e622"/><circle cx="1335.7" cy="745.2" r="4.6" fill="#f0e622"/><circle cx="1424.1" cy="743.9" r="4.6" fill="#f0e622"/><circle cx="1512.5" cy="742.4" r="4.6" fill="#f0e622"/><path d="M540.3 776.9 L628.7 776.1 L717.1 776.3 L805.4 776.0 L893.8 776.4 L982.2 777.9 L1070.6 777.3 L1159.0 778.5 L1247.3 785.2 L1335.7 778.7 L1424.1 780.2 L1512.5 779.4" fill="none" stroke="#fde725" stroke-opacity="0.5" stroke-width="2"/><circle cx="540.3" cy="776.9" r="4.6" fill="#fde725"/><circle cx="628.7" cy="776.1" r="4.6" fill="#fde725"/><circle cx="717.1" cy="776.3" r="4.6" fill="#fde725"/><circle cx="805.4" cy="776.0" r="4.6" fill="#fde725"/><circle cx="893.8" cy="776.4" r="4.6" fill="#fde725"/><circle cx="982.2" cy="777.9" r="4.6" fill="#fde725"/><circle cx="1070.6" cy="777.3" r="4.6" fill="#fde725"/><circle cx="1159.0" cy="778.5" r="4.6" fill="#fde725"/><circle cx="1247.3" cy="785.2" r="4.6" fill="#fde725"/><circle cx="1335.7" cy="778.7" r="4.6" fill="#fde725"/><circle cx="1424.1" cy="780.2" r="4.6" fill="#fde725"/><circle cx="1512.5" cy="779.4" r="4.6" fill="#fde725"/><path d="M540.3 796.6 L628.7 797.0 L717.1 796.6 L805.4 796.1 L893.8 797.3 L982.2 797.6 L1070.6 796.2 L1159.0 795.3 L1247.3 796.5 L1335.7 797.0 L1424.1 795.0 L1512.5 796.5" fill="none" stroke="#fde725" stroke-opacity="0.5" stroke-width="2"/><circle cx="540.3" cy="796.6" r="4.6" fill="#fde725"/><circle cx="628.7" cy="797.0" r="4.6" fill="#fde725"/><circle cx="717.1" cy="796.6" r="4.6" fill="#fde725"/><circle cx="805.4" cy="796.1" r="4.6" fill="#fde725"/><circle cx="893.8" cy="797.3" r="4.6" fill="#fde725"/><circle cx="982.2" cy="797.6" r="4.6" fill="#fde725"/><circle cx="1070.6" cy="796.2" r="4.6" fill="#fde725"/><circle cx="1159.0" cy="795.3" r="4.6" fill="#fde725"/><circle cx="1247.3" cy="796.5" r="4.6" fill="#fde725"/><circle cx="1335.7" cy="797.0" r="4.6" fill="#fde725"/><circle cx="1424.1" cy="795.0" r="4.6" fill="#fde725"/><circle cx="1512.5" cy="796.5" r="4.6" fill="#fde725"/><path d="M540.3 793.1 L628.7 792.8 L717.1 793.2 L805.4 792.5 L893.8 793.2 L982.2 791.9 L1070.6 792.1 L1159.0 792.6 L1247.3 792.2 L1335.7 792.9 L1424.1 792.8 L1512.5 792.6" fill="none" stroke="#fde725" stroke-opacity="0.5" stroke-width="2"/><circle cx="540.3" cy="793.1" r="4.6" fill="#fde725"/><circle cx="628.7" cy="792.8" r="4.6" fill="#fde725"/><circle cx="717.1" cy="793.2" r="4.6" fill="#fde725"/><circle cx="805.4" cy="792.5" r="4.6" fill="#fde725"/><circle cx="893.8" cy="793.2" r="4.6" fill="#fde725"/><circle cx="982.2" cy="791.9" r="4.6" fill="#fde725"/><circle cx="1070.6" cy="792.1" r="4.6" fill="#fde725"/><circle cx="1159.0" cy="792.6" r="4.6" fill="#fde725"/><circle cx="1247.3" cy="792.2" r="4.6" fill="#fde725"/><circle cx="1335.7" cy="792.9" r="4.6" fill="#fde725"/><circle cx="1424.1" cy="792.8" r="4.6" fill="#fde725"/><circle cx="1512.5" cy="792.6" r="4.6" fill="#fde725"/><path d="M540.3 799.1 L628.7 799.3 L717.1 798.6 L805.4 799.1 L893.8 799.4 L982.2 799.4 L1070.6 798.9 L1159.0 799.4 L1247.3 799.4 L1335.7 799.1 L1424.1 799.4 L1512.5 799.4" fill="none" stroke="#fde725" stroke-opacity="0.5" stroke-width="2"/><circle cx="540.3" cy="799.1" r="4.6" fill="#fde725"/><circle cx="628.7" cy="799.3" r="4.6" fill="#fde725"/><circle cx="717.1" cy="798.6" r="4.6" fill="#fde725"/><circle cx="805.4" cy="799.1" r="4.6" fill="#fde725"/><circle cx="893.8" cy="799.4" r="4.6" fill="#fde725"/><circle cx="982.2" cy="799.4" r="4.6" fill="#fde725"/><circle cx="1070.6" cy="798.9" r="4.6" fill="#fde725"/><circle cx="1159.0" cy="799.4" r="4.6" fill="#fde725"/><circle cx="1247.3" cy="799.4" r="4.6" fill="#fde725"/><circle cx="1335.7" cy="799.1" r="4.6" fill="#fde725"/><circle cx="1424.1" cy="799.4" r="4.6" fill="#fde725"/><circle cx="1512.5" cy="799.4" r="4.6" fill="#fde725"/><path d="M540.3 798.7 L628.7 798.7 L717.1 798.0 L805.4 797.8 L893.8 798.2 L982.2 798.7 L1070.6 798.2 L1159.0 797.8 L1247.3 798.7 L1335.7 798.5 L1424.1 799.1 L1512.5 799.1" fill="none" stroke="#fde725" stroke-opacity="0.5" stroke-width="2"/><circle cx="540.3" cy="798.7" r="4.6" fill="#fde725"/><circle cx="628.7" cy="798.7" r="4.6" fill="#fde725"/><circle cx="717.1" cy="798.0" r="4.6" fill="#fde725"/><circle cx="805.4" cy="797.8" r="4.6" fill="#fde725"/><circle cx="893.8" cy="798.2" r="4.6" fill="#fde725"/><circle cx="982.2" cy="798.7" r="4.6" fill="#fde725"/><circle cx="1070.6" cy="798.2" r="4.6" fill="#fde725"/><circle cx="1159.0" cy="797.8" r="4.6" fill="#fde725"/><circle cx="1247.3" cy="798.7" r="4.6" fill="#fde725"/><circle cx="1335.7" cy="798.5" r="4.6" fill="#fde725"/><circle cx="1424.1" cy="799.1" r="4.6" fill="#fde725"/><circle cx="1512.5" cy="799.1" r="4.6" fill="#fde725"/><path d="M540.3 798.8 L628.7 798.3 L717.1 799.1 L805.4 797.7 L893.8 798.9 L982.2 797.9 L1070.6 798.5 L1159.0 798.4 L1247.3 797.8 L1335.7 798.9 L1424.1 798.1 L1512.5 798.1" fill="none" stroke="#fde725" stroke-opacity="0.5" stroke-width="2"/><circle cx="540.3" cy="798.8" r="4.6" fill="#fde725"/><circle cx="628.7" cy="798.3" r="4.6" fill="#fde725"/><circle cx="717.1" cy="799.1" r="4.6" fill="#fde725"/><circle cx="805.4" cy="797.7" r="4.6" fill="#fde725"/><circle cx="893.8" cy="798.9" r="4.6" fill="#fde725"/><circle cx="982.2" cy="797.9" r="4.6" fill="#fde725"/><circle cx="1070.6" cy="798.5" r="4.6" fill="#fde725"/><circle cx="1159.0" cy="798.4" r="4.6" fill="#fde725"/><circle cx="1247.3" cy="797.8" r="4.6" fill="#fde725"/><circle cx="1335.7" cy="798.9" r="4.6" fill="#fde725"/><circle cx="1424.1" cy="798.1" r="4.6" fill="#fde725"/><circle cx="1512.5" cy="798.1" r="4.6" fill="#fde725"/><path d="M540.3 797.6 L628.7 797.7 L717.1 797.8 L805.4 797.8 L893.8 797.4 L982.2 798.2 L1070.6 798.0 L1159.0 798.0 L1247.3 797.3 L1335.7 797.3 L1424.1 797.5 L1512.5 798.1" fill="none" stroke="#fde725" stroke-opacity="0.5" stroke-width="2"/><circle cx="540.3" cy="797.6" r="4.6" fill="#fde725"/><circle cx="628.7" cy="797.7" r="4.6" fill="#fde725"/><circle cx="717.1" cy="797.8" r="4.6" fill="#fde725"/><circle cx="805.4" cy="797.8" r="4.6" fill="#fde725"/><circle cx="893.8" cy="797.4" r="4.6" fill="#fde725"/><circle cx="982.2" cy="798.2" r="4.6" fill="#fde725"/><circle cx="1070.6" cy="798.0" r="4.6" fill="#fde725"/><circle cx="1159.0" cy="798.0" r="4.6" fill="#fde725"/><circle cx="1247.3" cy="797.3" r="4.6" fill="#fde725"/><circle cx="1335.7" cy="797.3" r="4.6" fill="#fde725"/><circle cx="1424.1" cy="797.5" r="4.6" fill="#fde725"/><circle cx="1512.5" cy="798.1" r="4.6" fill="#fde725"/><path d="M491.5 372 L491.5 820" stroke="#000" stroke-width="1.1"/><path d="M491 820.5 L1561.5 820.5" stroke="#9a9a9a" stroke-width="1.1"/><path d="M487 799.1 L491 799.1" stroke="#333" stroke-width="1.1"/><text x="483.2" y="804.5" text-anchor="end" font-size="16.4" fill="#444" textLength="8.4" lengthAdjust="spacingAndGlyphs">0</text><path d="M487 683.5 L491 683.5" stroke="#333" stroke-width="1.1"/><text x="483.2" y="688.9" text-anchor="end" font-size="16.4" fill="#444" textLength="53.8" lengthAdjust="spacingAndGlyphs">10 000</text><path d="M487 567.9 L491 567.9" stroke="#333" stroke-width="1.1"/><text x="483.2" y="573.3" text-anchor="end" font-size="16.4" fill="#444" textLength="53.8" lengthAdjust="spacingAndGlyphs">20 000</text><path d="M487 452.3 L491 452.3" stroke="#333" stroke-width="1.1"/><text x="483.2" y="457.7" text-anchor="end" font-size="16.4" fill="#444" textLength="53.8" lengthAdjust="spacingAndGlyphs">30 000</text><path d="M540.3 820.5 L540.3 824.2" stroke="#111" stroke-width="1.1"/><text x="540.3" y="843" text-anchor="middle" font-size="16.4" fill="#444" textLength="29.5" lengthAdjust="spacingAndGlyphs">Mar</text><text x="540.3" y="863.1" text-anchor="middle" font-size="16.4" fill="#444" textLength="38.8" lengthAdjust="spacingAndGlyphs">2013</text><path d="M628.7 820.5 L628.7 824.2" stroke="#111" stroke-width="1.1"/><text x="628.7" y="843" text-anchor="middle" font-size="16.4" fill="#444" textLength="29.5" lengthAdjust="spacingAndGlyphs">Mar</text><text x="628.7" y="863.1" text-anchor="middle" font-size="16.4" fill="#444" textLength="38.8" lengthAdjust="spacingAndGlyphs">2014</text><path d="M717.1 820.5 L717.1 824.2" stroke="#111" stroke-width="1.1"/><text x="717.1" y="843" text-anchor="middle" font-size="16.4" fill="#444" textLength="29.5" lengthAdjust="spacingAndGlyphs">Mar</text><text x="717.1" y="863.1" text-anchor="middle" font-size="16.4" fill="#444" textLength="38.8" lengthAdjust="spacingAndGlyphs">2015</text><path d="M805.4 820.5 L805.4 824.2" stroke="#111" stroke-width="1.1"/><text x="805.4" y="843" text-anchor="middle" font-size="16.4" fill="#444" textLength="29.5" lengthAdjust="spacingAndGlyphs">Mar</text><text x="805.4" y="863.1" text-anchor="middle" font-size="16.4" fill="#444" textLength="38.8" lengthAdjust="spacingAndGlyphs">2016</text><path d="M893.8 820.5 L893.8 824.2" stroke="#111" stroke-width="1.1"/><text x="893.8" y="843" text-anchor="middle" font-size="16.4" fill="#444" textLength="29.5" lengthAdjust="spacingAndGlyphs">Mar</text><text x="893.8" y="863.1" text-anchor="middle" font-size="16.4" fill="#444" textLength="38.8" lengthAdjust="spacingAndGlyphs">2017</text><path d="M982.2 820.5 L982.2 824.2" stroke="#111" stroke-width="1.1"/><text x="982.2" y="843" text-anchor="middle" font-size="16.4" fill="#444" textLength="29.5" lengthAdjust="spacingAndGlyphs">Mar</text><text x="982.2" y="863.1" text-anchor="middle" font-size="16.4" fill="#444" textLength="38.8" lengthAdjust="spacingAndGlyphs">2018</text><path d="M1070.6 820.5 L1070.6 824.2" stroke="#111" stroke-width="1.1"/><text x="1070.6" y="843" text-anchor="middle" font-size="16.4" fill="#444" textLength="29.5" lengthAdjust="spacingAndGlyphs">Mar</text><text x="1070.6" y="863.1" text-anchor="middle" font-size="16.4" fill="#444" textLength="38.8" lengthAdjust="spacingAndGlyphs">2019</text><path d="M1159.0 820.5 L1159.0 824.2" stroke="#111" stroke-width="1.1"/><text x="1159.0" y="843" text-anchor="middle" font-size="16.4" fill="#444" textLength="29.5" lengthAdjust="spacingAndGlyphs">Mar</text><text x="1159.0" y="863.1" text-anchor="middle" font-size="16.4" fill="#444" textLength="38.8" lengthAdjust="spacingAndGlyphs">2020</text><path d="M1247.3 820.5 L1247.3 824.2" stroke="#111" stroke-width="1.1"/><text x="1247.3" y="843" text-anchor="middle" font-size="16.4" fill="#444" textLength="29.5" lengthAdjust="spacingAndGlyphs">Mar</text><text x="1247.3" y="863.1" text-anchor="middle" font-size="16.4" fill="#444" textLength="38.8" lengthAdjust="spacingAndGlyphs">2021</text><path d="M1335.7 820.5 L1335.7 824.2" stroke="#111" stroke-width="1.1"/><text x="1335.7" y="843" text-anchor="middle" font-size="16.4" fill="#444" textLength="29.5" lengthAdjust="spacingAndGlyphs">Mar</text><text x="1335.7" y="863.1" text-anchor="middle" font-size="16.4" fill="#444" textLength="38.8" lengthAdjust="spacingAndGlyphs">2022</text><path d="M1424.1 820.5 L1424.1 824.2" stroke="#111" stroke-width="1.1"/><text x="1424.1" y="843" text-anchor="middle" font-size="16.4" fill="#444" textLength="29.5" lengthAdjust="spacingAndGlyphs">Mar</text><text x="1424.1" y="863.1" text-anchor="middle" font-size="16.4" fill="#444" textLength="38.8" lengthAdjust="spacingAndGlyphs">2023</text><path d="M1512.5 820.5 L1512.5 824.2" stroke="#111" stroke-width="1.1"/><text x="1512.5" y="843" text-anchor="middle" font-size="16.4" fill="#444" textLength="29.5" lengthAdjust="spacingAndGlyphs">Mar</text><text x="1512.5" y="863.1" text-anchor="middle" font-size="16.4" fill="#444" textLength="38.8" lengthAdjust="spacingAndGlyphs">2024</text><text x="1026.8" y="889.3" text-anchor="middle" font-size="19.3" fill="#1d1d1d" textLength="309" lengthAdjust="spacingAndGlyphs">End date of yearly time interval</text><text transform="translate(421.5 595.2) rotate(-90)" x="0" y="0" text-anchor="middle" font-size="22" fill="#1d1d1d" textLength="162" lengthAdjust="spacingAndGlyphs">Recorded events</text><path d="M639.6 493.9 L956.1 493.9 L956.1 586.9 L639.6 586.9 L639.6 546.1 L633.2 540.1 L639.6 534.1 Z" fill="#a0da39" stroke="#444" stroke-width="1.2"/><text x="642.6" y="509.2" font-size="13.6" fill="#444"><tspan font-weight="bold">Timeframe:&#160;</tspan>Apr 2013 to Mar 2014</text><text x="642.6" y="526.9" font-size="13.6" fill="#444"><tspan font-weight="bold">Code:&#160;</tspan>W262</text><text x="642.6" y="544.6" font-size="13.6" fill="#444"><tspan font-weight="bold">Description:&#160;</tspan>Manipulation of fracture of bone NEC</text><text x="642.6" y="562.3" font-size="13.6" fill="#444"><tspan font-weight="bold">Code&#160;usage:&#160;</tspan>22,370</text><text x="642.6" y="580.0" font-size="13.6" fill="#444"><tspan font-weight="bold">Proportion&#160;of&#160;annual&#160;usage:&#160;</tspan>10.80%</text></svg>
<svg style="position:absolute;left:538px;top:945px;overflow:visible" width="55" height="67" viewBox="0 0 55 67">
<defs><clipPath id="bclip"><path d="M4.9 5.1 L27 5.1 C39.5 5.1 47 11.5 47 20 C47 25.5 45 29.5 42 32.2 C46.3 34.6 48.7 39.5 48.7 46 C48.7 55.5 41.5 61.8 28 61.8 L4.9 61.8 Z"/></clipPath></defs>
<g clip-path="url(#bclip)">
<rect x="0" y="0" width="60" height="13.6" fill="#ffb000"/>
<rect x="0" y="13.2" width="60" height="13.6" fill="#ffc83a"/>
<rect x="0" y="26.5" width="60" height="13.3" fill="#ff72f6"/>
<rect x="0" y="39.5" width="60" height="13.3" fill="#35b5f7"/>
<rect x="0" y="52.5" width="60" height="15" fill="#17d3e4"/>
<path d="M15.5 13.2 C19 9 21.5 5.5 26 4 L60 4 L60 10.5 C50 11 38 13.5 26.3 19 C22.5 16 19.5 14 15.5 13.2 Z" fill="#ff7a00"/>
<path d="M26.3 19 C36 13.5 46 11.5 60 10.5 L60 26 C50 26 38 23.5 26.3 19 Z" fill="#f20e50"/>
<path d="M18.6 26.4 C21 23.5 23.5 21 26.3 19 C37 23.5 47 25.5 60 26 L60 33.5 L41.5 32.6 C33 32 25 29.5 18.6 26.4 Z" fill="#ff2e97"/>
<path d="M19.7 39.5 C26 36 33 33 41.5 32.6 L60 33.5 L60 40 C48 40 36 42 27 46 C25 43.5 22.5 41 19.7 39.5 Z" fill="#9b5ae8"/>
<path d="M27 46 C36 42 48 40 60 40 L60 53 C48 53 38 51 27 46 Z" fill="#5324b9"/>
<path d="M16.2 53 C19.5 50.5 23 48 27 46 C37 50.5 48 53 60 53 L60 70 L24 70 C22 62 19.5 56 16.2 53 Z" fill="#5b71f1"/>
<path d="M0 12.6 L8.5 12.6 C11.5 12.6 13.8 13.3 15 14.2 C13.2 16.6 10.8 17.8 7.5 17.8 L0 17.8 Z" fill="#fff"/>
<path d="M0 25.2 L11 25.2 C14.5 25.2 17.3 25.7 19.2 26.8 C16.8 29 13.5 30 10 30 L0 30 Z" fill="#fff"/>
<path d="M0 38.1 L11 38.1 C14.5 38.1 17.8 38.6 19.9 39.7 C17.5 41.4 14 42.2 10.5 42.2 L0 42.2 Z" fill="#fff"/>
<path d="M0 49.8 L9 49.8 C12 49.8 14.5 50.6 16.2 52.2 C14.3 53.6 11.5 54.4 8.5 54.4 L0 54.4 Z" fill="#fff"/>
</g></svg>
<svg style="position:absolute;left:0;top:0;overflow:visible" width="1" height="1"><text x="599.90" y="964.90" font-family="'Liberation Sans',sans-serif" font-size="14.50" font-weight="bold" fill="#0d1838" textLength="66.30" lengthAdjust="spacingAndGlyphs">BENNETT</text></svg>
<svg style="position:absolute;left:0;top:0;overflow:visible" width="1" height="1"><text x="599.90" y="979.80" font-family="'Liberation Sans',sans-serif" font-size="14.50" font-weight="bold" fill="#0d1838" textLength="73.30" lengthAdjust="spacingAndGlyphs">INSTITUTE</text></svg>
<svg style="position:absolute;left:0;top:0;overflow:visible" width="1" height="1"><text x="599.90" y="991.90" font-family="'Liberation Sans',sans-serif" font-size="9.40"  fill="#3a4764" textLength="66.00" lengthAdjust="spacing">FOR APPLIED</text></svg>
<svg style="position:absolute;left:0;top:0;overflow:visible" width="1" height="1"><text x="599.90" y="1001.80" font-family="'Liberation Sans',sans-serif" font-size="9.40"  fill="#3a4764" textLength="72.40" lengthAdjust="spacing">DATA SCIENCE</text></svg>
<svg style="position:absolute;left:0;top:0;overflow:visible" width="1" height="1"><text x="752.30" y="957.50" font-family="'Liberation Sans',sans-serif" font-size="10.90"  fill="#4a546c" textLength="148.90" lengthAdjust="spacingAndGlyphs">NUFFIELD DEPARTMENT OF</text></svg>
<svg style="position:absolute;left:0;top:0;overflow:visible" width="1" height="1"><text x="752.30" y="978.10" font-family="'Liberation Sans',sans-serif" font-size="20.60" font-weight="bold" fill="#101b3b" textLength="148.90" lengthAdjust="spacingAndGlyphs">PRIMARY CARE</text></svg>
<svg style="position:absolute;left:0;top:0;overflow:visible" width="1" height="1"><text x="752.30" y="997.60" font-family="'Liberation Sans',sans-serif" font-size="21.20"  fill="#3d4863" textLength="148.90" lengthAdjust="spacingAndGlyphs">HEALTH SCIENCES</text></svg>
<svg style="position:absolute;left:0;top:0;overflow:visible" width="1" height="1"><text x="752.30" y="1009.20" font-family="'Liberation Sans',sans-serif" font-size="9.70"  fill="#4a546c" textLength="94.50" lengthAdjust="spacingAndGlyphs">Medical Sciences Division</text></svg>
<div style="position:absolute;left:1005.90px;top:947.10px;width:61.90px;height:62.70px;box-sizing:border-box;background:#0b2151;"></div>
<svg style="position:absolute;left:1030.00px;top:944.00px;" width="40.00" height="44.00" viewBox="0 0 40.00 44.00"><circle cx="20" cy="20.7" r="12.6" fill="none" stroke="#aeb5c6" stroke-width="1.4" stroke-dasharray="1.2 0.6"/><circle cx="20" cy="20.7" r="9.6" fill="none" stroke="#c8ccd6" stroke-width="0.9"/><path d="M14.5 17.5 L25.5 17.5 L25.5 24.5 L14.5 24.5 Z" fill="#d8dce5"/><path d="M20 17.5 L20 24.5 M15 21 L25 21" stroke="#7a86a0" stroke-width="0.5"/><circle cx="16.5" cy="14.5" r="1.2" fill="#c8ccd6"/><circle cx="23.5" cy="14.5" r="1.2" fill="#c8ccd6"/><path d="M17 35 Q20 31 23 35 Q20 38 17 35 Z" fill="none" stroke="#c8ccd6" stroke-width="0.9"/></svg>
<svg style="position:absolute;left:0;top:0;overflow:visible" width="1" height="1"><text x="1011.00" y="992.80" font-family="'Liberation Sans',sans-serif" font-size="6.40" font-weight="bold" fill="#d6dae4" textLength="41.60" lengthAdjust="spacingAndGlyphs">UNIVERSITY OF</text></svg>
<svg style="position:absolute;left:0;top:0;overflow:visible" width="1" height="1"><text x="1011.00" y="1004.10" font-family="'Liberation Serif',serif" font-size="12.30"  fill="#f0f2f6" textLength="52.30" lengthAdjust="spacingAndGlyphs">OXFORD</text></svg>
</body></html>
